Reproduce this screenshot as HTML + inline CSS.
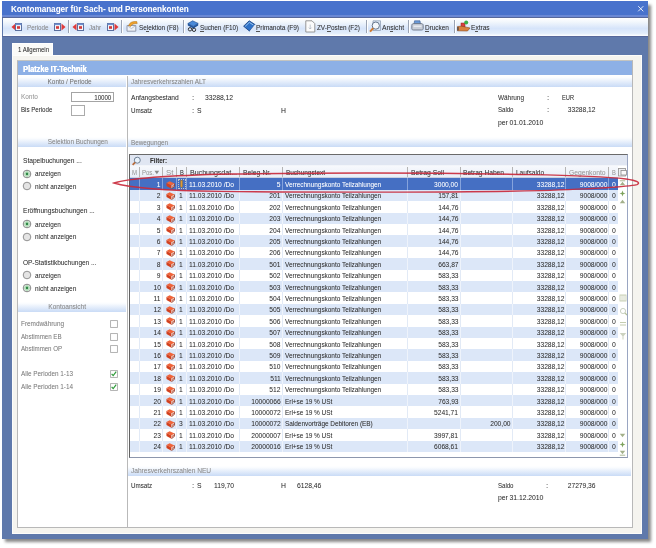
<!DOCTYPE html>
<html><head><meta charset="utf-8"><style>
html,body{margin:0;padding:0;}
body{width:656px;height:548px;position:relative;overflow:hidden;background:#fff;font-family:'Liberation Sans', sans-serif;}
div{box-sizing:border-box;}
</style></head><body>
<div style="position:absolute;left:5px;top:5px;width:645.5px;height:536.5px;background:#888;filter:blur(1.6px);"></div>
<div style="position:absolute;left:2px;top:1px;width:646px;height:538px;background:#5f79ab;"></div>
<div style="position:absolute;left:2px;top:1px;width:646px;height:15px;background:#4872cc;"></div>
<div style="position:absolute;left:2px;top:15px;width:646px;height:1.5px;background:#6a88d4;"></div>
<div style="position:absolute;left:2px;top:16.5px;width:646px;height:1.5px;background:#56679a;"></div>
<div style="position:absolute;left:11.00px;top:5.66px;font-size:8.2px;line-height:8.2px;white-space:pre;color:#fff;transform:scaleX(0.991);transform-origin:left 0;text-shadow:0.3px 0 0 rgba(255,255,255,0.22);font-weight:bold;">Kontomanager für Sach- und Personenkonten</div>
<svg style="position:absolute;left:637px;top:5px" width="8" height="8" viewBox="0 0 8 8"><path d="M1.2 1.2 L6.3 6.3 M6.3 1.2 L1.2 6.3" stroke="#f4f7ff" stroke-width="0.9"/></svg>
<div style="position:absolute;left:2.5px;top:18px;width:645px;height:18px;background:linear-gradient(#ffffff 0%,#f2f7fc 22%,#d6e4fa 58%,#e2edfa 85%,#ffffff 100%);"></div>
<div style="position:absolute;left:2px;top:36px;width:646px;height:1px;background:#56679a;"></div>
<div style="position:absolute;left:12px;top:43px;width:41px;height:13px;background:#fbfbf8;border:1px solid #fff;border-bottom:none;"></div>
<div style="position:absolute;left:18.00px;top:45.93px;font-size:8px;line-height:8px;white-space:pre;color:#333;transform:scaleX(0.750);transform-origin:left 0;text-shadow:0.3px 0 0 rgba(51,51,51,0.22);">1 Allgemein</div>
<div style="position:absolute;left:12px;top:55px;width:630px;height:479px;background:#f5f4ef;border:1px solid #fdfdfb;"></div>
<div style="position:absolute;left:17px;top:60px;width:616px;height:468px;background:#fff;border:1px solid #b8b8b8;border-top-color:#c4c4c0;"></div>
<div style="position:absolute;left:18px;top:61.3px;width:614px;height:14.2px;background:#8db0e6;"></div>
<div style="position:absolute;left:23.00px;top:65.09px;font-size:8.4px;line-height:8.4px;white-space:pre;color:#fff;transform:scaleX(0.882);transform-origin:left 0;text-shadow:0.3px 0 0 rgba(255,255,255,0.22);font-weight:bold;text-shadow:0.35px 0 0 #fff;">Platzke IT-Technik</div>
<div style="position:absolute;left:126.5px;top:75.5px;width:1.2px;height:452px;background:#b9b9b9;"></div>
<div style="position:absolute;left:18px;top:75.5px;width:107.5px;height:11.5px;background:linear-gradient(#fdfeff 10%,#c9dbf6);"></div>
<div style="position:absolute;left:42.42px;top:77.93px;font-size:8px;line-height:8px;white-space:pre;color:#777;transform:scaleX(0.798);transform-origin:center 0;text-shadow:0.3px 0 0 rgba(119,119,119,0.22);">Konto / Periode</div>
<div style="position:absolute;left:128px;top:75.5px;width:504px;height:11.5px;background:linear-gradient(#fdfeff 10%,#c9dbf6);"></div>
<div style="position:absolute;left:131.00px;top:77.93px;font-size:8px;line-height:8px;white-space:pre;color:#888;transform:scaleX(0.797);transform-origin:left 0;text-shadow:0.3px 0 0 rgba(136,136,136,0.22);">Jahresverkehrszahlen ALT</div>
<div style="position:absolute;left:20.70px;top:93.03px;font-size:8px;line-height:8px;white-space:pre;color:#999;transform:scaleX(0.804);transform-origin:left 0;text-shadow:0.3px 0 0 rgba(153,153,153,0.22);">Konto</div>
<div style="position:absolute;left:71.4px;top:92.4px;width:42.4px;height:10px;background:#fff;border:1px solid #a4a4a4;"></div>
<div style="position:absolute;left:89.35px;top:93.63px;font-size:8px;line-height:8px;white-space:pre;color:#333;transform:scaleX(0.764);transform-origin:right 0;text-shadow:0.3px 0 0 rgba(51,51,51,0.22);">10000</div>
<div style="position:absolute;left:20.70px;top:105.93px;font-size:8px;line-height:8px;white-space:pre;color:#333;transform:scaleX(0.765);transform-origin:left 0;text-shadow:0.3px 0 0 rgba(51,51,51,0.22);">Bis Periode</div>
<div style="position:absolute;left:71.4px;top:104.5px;width:13.4px;height:11px;background:#fff;border:1px solid #ababab;"></div>
<div style="position:absolute;left:18px;top:136.7px;width:107.5px;height:10.1px;background:linear-gradient(#fdfeff 10%,#c9dbf6);"></div>
<div style="position:absolute;left:40.39px;top:137.73px;font-size:8px;line-height:8px;white-space:pre;color:#888;transform:scaleX(0.793);transform-origin:center 0;text-shadow:0.3px 0 0 rgba(136,136,136,0.22);">Selektion Buchungen</div>
<div style="position:absolute;left:22.70px;top:157.13px;font-size:8px;line-height:8px;white-space:pre;color:#333;transform:scaleX(0.825);transform-origin:left 0;text-shadow:0.3px 0 0 rgba(51,51,51,0.22);">Stapelbuchungen ...</div>
<svg style="position:absolute;left:21.8px;top:169px" width="10" height="10" viewBox="0 0 10 10"><circle cx="5" cy="5" r="3.8" fill="#fff" stroke="#666" stroke-width="0.8"/><circle cx="5" cy="5" r="2.5" fill="#e4f4e6" stroke="#94d09c" stroke-width="0.7"/><circle cx="5" cy="5" r="1.4" fill="#2f8c46"/></svg>
<div style="position:absolute;left:34.80px;top:170.23px;font-size:8px;line-height:8px;white-space:pre;color:#333;transform:scaleX(0.791);transform-origin:left 0;text-shadow:0.3px 0 0 rgba(51,51,51,0.22);">anzeigen</div>
<svg style="position:absolute;left:21.8px;top:181.2px" width="10" height="10" viewBox="0 0 10 10"><circle cx="5" cy="5" r="3.8" fill="#e4e4e4" stroke="#7a7a7a" stroke-width="0.8"/></svg>
<div style="position:absolute;left:34.80px;top:182.83px;font-size:8px;line-height:8px;white-space:pre;color:#333;transform:scaleX(0.799);transform-origin:left 0;text-shadow:0.3px 0 0 rgba(51,51,51,0.22);">nicht anzeigen</div>
<div style="position:absolute;left:22.90px;top:206.73px;font-size:8px;line-height:8px;white-space:pre;color:#333;transform:scaleX(0.823);transform-origin:left 0;text-shadow:0.3px 0 0 rgba(51,51,51,0.22);">Eröffnungsbuchungen ...</div>
<svg style="position:absolute;left:21.8px;top:219.3px" width="10" height="10" viewBox="0 0 10 10"><circle cx="5" cy="5" r="3.8" fill="#fff" stroke="#666" stroke-width="0.8"/><circle cx="5" cy="5" r="2.5" fill="#e4f4e6" stroke="#94d09c" stroke-width="0.7"/><circle cx="5" cy="5" r="1.4" fill="#2f8c46"/></svg>
<div style="position:absolute;left:34.80px;top:220.63px;font-size:8px;line-height:8px;white-space:pre;color:#333;transform:scaleX(0.791);transform-origin:left 0;text-shadow:0.3px 0 0 rgba(51,51,51,0.22);">anzeigen</div>
<svg style="position:absolute;left:21.8px;top:231.5px" width="10" height="10" viewBox="0 0 10 10"><circle cx="5" cy="5" r="3.8" fill="#e4e4e4" stroke="#7a7a7a" stroke-width="0.8"/></svg>
<div style="position:absolute;left:34.80px;top:233.03px;font-size:8px;line-height:8px;white-space:pre;color:#333;transform:scaleX(0.799);transform-origin:left 0;text-shadow:0.3px 0 0 rgba(51,51,51,0.22);">nicht anzeigen</div>
<div style="position:absolute;left:22.90px;top:258.73px;font-size:8px;line-height:8px;white-space:pre;color:#333;transform:scaleX(0.809);transform-origin:left 0;text-shadow:0.3px 0 0 rgba(51,51,51,0.22);">OP-Statistikbuchungen ...</div>
<svg style="position:absolute;left:21.8px;top:270.2px" width="10" height="10" viewBox="0 0 10 10"><circle cx="5" cy="5" r="3.8" fill="#e4e4e4" stroke="#7a7a7a" stroke-width="0.8"/></svg>
<div style="position:absolute;left:34.80px;top:271.53px;font-size:8px;line-height:8px;white-space:pre;color:#333;transform:scaleX(0.791);transform-origin:left 0;text-shadow:0.3px 0 0 rgba(51,51,51,0.22);">anzeigen</div>
<svg style="position:absolute;left:21.8px;top:283.3px" width="10" height="10" viewBox="0 0 10 10"><circle cx="5" cy="5" r="3.8" fill="#fff" stroke="#666" stroke-width="0.8"/><circle cx="5" cy="5" r="2.5" fill="#e4f4e6" stroke="#94d09c" stroke-width="0.7"/><circle cx="5" cy="5" r="1.4" fill="#2f8c46"/></svg>
<div style="position:absolute;left:34.80px;top:284.73px;font-size:8px;line-height:8px;white-space:pre;color:#333;transform:scaleX(0.799);transform-origin:left 0;text-shadow:0.3px 0 0 rgba(51,51,51,0.22);">nicht anzeigen</div>
<div style="position:absolute;left:18px;top:302px;width:107.5px;height:10px;background:linear-gradient(#fdfeff 10%,#c9dbf6);"></div>
<div style="position:absolute;left:43.67px;top:302.93px;font-size:8px;line-height:8px;white-space:pre;color:#888;transform:scaleX(0.815);transform-origin:center 0;text-shadow:0.3px 0 0 rgba(136,136,136,0.22);">Kontoansicht</div>
<div style="position:absolute;left:20.70px;top:320.23px;font-size:8px;line-height:8px;white-space:pre;color:#7e7e7e;transform:scaleX(0.799);transform-origin:left 0;text-shadow:0.3px 0 0 rgba(126,126,126,0.22);">Fremdwährung</div>
<svg style="position:absolute;left:110px;top:320.2px" width="8" height="8" viewBox="0 0 8 8"><rect x="0.6" y="0.6" width="6.8" height="6.8" fill="#fff" stroke="#a6a6a6" stroke-width="0.85"/></svg>
<div style="position:absolute;left:20.70px;top:332.83px;font-size:8px;line-height:8px;white-space:pre;color:#7e7e7e;transform:scaleX(0.766);transform-origin:left 0;text-shadow:0.3px 0 0 rgba(126,126,126,0.22);">Abstimmen EB</div>
<svg style="position:absolute;left:110px;top:332.79999999999995px" width="8" height="8" viewBox="0 0 8 8"><rect x="0.6" y="0.6" width="6.8" height="6.8" fill="#fff" stroke="#a6a6a6" stroke-width="0.85"/></svg>
<div style="position:absolute;left:20.70px;top:345.43px;font-size:8px;line-height:8px;white-space:pre;color:#7e7e7e;transform:scaleX(0.762);transform-origin:left 0;text-shadow:0.3px 0 0 rgba(126,126,126,0.22);">Abstimmen OP</div>
<svg style="position:absolute;left:110px;top:345.4px" width="8" height="8" viewBox="0 0 8 8"><rect x="0.6" y="0.6" width="6.8" height="6.8" fill="#fff" stroke="#a6a6a6" stroke-width="0.85"/></svg>
<div style="position:absolute;left:20.70px;top:370.03px;font-size:8px;line-height:8px;white-space:pre;color:#7e7e7e;transform:scaleX(0.790);transform-origin:left 0;text-shadow:0.3px 0 0 rgba(126,126,126,0.22);">Alle Perioden 1-13</div>
<svg style="position:absolute;left:110px;top:370.0px" width="8" height="8" viewBox="0 0 8 8"><rect x="0.6" y="0.6" width="6.8" height="6.8" fill="#fff" stroke="#a6a6a6" stroke-width="0.85"/><path d="M1.6 3.8 L3.2 5.6 L6.2 1.6" stroke="#2f9b3a" stroke-width="1.2" fill="none"/></svg>
<div style="position:absolute;left:20.70px;top:382.83px;font-size:8px;line-height:8px;white-space:pre;color:#7e7e7e;transform:scaleX(0.790);transform-origin:left 0;text-shadow:0.3px 0 0 rgba(126,126,126,0.22);">Alle Perioden 1-14</div>
<svg style="position:absolute;left:110px;top:382.79999999999995px" width="8" height="8" viewBox="0 0 8 8"><rect x="0.6" y="0.6" width="6.8" height="6.8" fill="#fff" stroke="#a6a6a6" stroke-width="0.85"/><path d="M1.6 3.8 L3.2 5.6 L6.2 1.6" stroke="#2f9b3a" stroke-width="1.2" fill="none"/></svg>
<div style="position:absolute;left:131.00px;top:93.93px;font-size:8px;line-height:8px;white-space:pre;color:#333;transform:scaleX(0.825);transform-origin:left 0;text-shadow:0.3px 0 0 rgba(51,51,51,0.22);">Anfangsbestand</div>
<div style="position:absolute;left:192.20px;top:93.93px;font-size:8px;line-height:8px;white-space:pre;color:#333;transform:scaleX(0.938);transform-origin:left 0;text-shadow:0.3px 0 0 rgba(51,51,51,0.22);">:</div>
<div style="position:absolute;left:204.60px;top:93.93px;font-size:8px;line-height:8px;white-space:pre;color:#333;transform:scaleX(0.839);transform-origin:left 0;text-shadow:0.3px 0 0 rgba(51,51,51,0.22);">33288,12</div>
<div style="position:absolute;left:131.00px;top:106.53px;font-size:8px;line-height:8px;white-space:pre;color:#333;transform:scaleX(0.774);transform-origin:left 0;text-shadow:0.3px 0 0 rgba(51,51,51,0.22);">Umsatz</div>
<div style="position:absolute;left:192.20px;top:106.53px;font-size:8px;line-height:8px;white-space:pre;color:#333;transform:scaleX(0.938);transform-origin:left 0;text-shadow:0.3px 0 0 rgba(51,51,51,0.22);">:</div>
<div style="position:absolute;left:197.00px;top:106.53px;font-size:8px;line-height:8px;white-space:pre;color:#333;transform:scaleX(0.844);transform-origin:left 0;text-shadow:0.3px 0 0 rgba(51,51,51,0.22);">S</div>
<div style="position:absolute;left:280.70px;top:106.53px;font-size:8px;line-height:8px;white-space:pre;color:#333;transform:scaleX(0.844);transform-origin:left 0;text-shadow:0.3px 0 0 rgba(51,51,51,0.22);">H</div>
<div style="position:absolute;left:497.80px;top:93.93px;font-size:8px;line-height:8px;white-space:pre;color:#333;transform:scaleX(0.801);transform-origin:left 0;text-shadow:0.3px 0 0 rgba(51,51,51,0.22);">Währung</div>
<div style="position:absolute;left:546.80px;top:93.93px;font-size:8px;line-height:8px;white-space:pre;color:#333;transform:scaleX(0.938);transform-origin:left 0;text-shadow:0.3px 0 0 rgba(51,51,51,0.22);">:</div>
<div style="position:absolute;left:562.30px;top:93.93px;font-size:8px;line-height:8px;white-space:pre;color:#333;transform:scaleX(0.710);transform-origin:left 0;text-shadow:0.3px 0 0 rgba(51,51,51,0.22);">EUR</div>
<div style="position:absolute;left:497.80px;top:106.43px;font-size:8px;line-height:8px;white-space:pre;color:#333;transform:scaleX(0.757);transform-origin:left 0;text-shadow:0.3px 0 0 rgba(51,51,51,0.22);">Saldo</div>
<div style="position:absolute;left:546.80px;top:106.43px;font-size:8px;line-height:8px;white-space:pre;color:#333;transform:scaleX(0.938);transform-origin:left 0;text-shadow:0.3px 0 0 rgba(51,51,51,0.22);">:</div>
<div style="position:absolute;left:562.12px;top:106.43px;font-size:8px;line-height:8px;white-space:pre;color:#333;transform:scaleX(0.824);transform-origin:right 0;text-shadow:0.3px 0 0 rgba(51,51,51,0.22);">33288,12</div>
<div style="position:absolute;left:497.80px;top:118.93px;font-size:8px;line-height:8px;white-space:pre;color:#333;transform:scaleX(0.840);transform-origin:left 0;text-shadow:0.3px 0 0 rgba(51,51,51,0.22);">per 01.01.2010</div>
<div style="position:absolute;left:128px;top:137.2px;width:504px;height:9.8px;background:linear-gradient(#fdfeff 10%,#c9dbf6);"></div>
<div style="position:absolute;left:131.00px;top:138.73px;font-size:8px;line-height:8px;white-space:pre;color:#888;transform:scaleX(0.792);transform-origin:left 0;text-shadow:0.3px 0 0 rgba(136,136,136,0.22);">Bewegungen</div>
<div style="position:absolute;left:128px;top:466px;width:503px;height:9.8px;background:linear-gradient(#fdfeff 10%,#c9dbf6);"></div>
<div style="position:absolute;left:130.70px;top:467.43px;font-size:8px;line-height:8px;white-space:pre;color:#8c8c8c;transform:scaleX(0.822);transform-origin:left 0;text-shadow:0.3px 0 0 rgba(140,140,140,0.22);">Jahresverkehrszahlen NEU</div>
<div style="position:absolute;left:131.00px;top:481.73px;font-size:8px;line-height:8px;white-space:pre;color:#333;transform:scaleX(0.774);transform-origin:left 0;text-shadow:0.3px 0 0 rgba(51,51,51,0.22);">Umsatz</div>
<div style="position:absolute;left:192.20px;top:481.73px;font-size:8px;line-height:8px;white-space:pre;color:#333;transform:scaleX(0.938);transform-origin:left 0;text-shadow:0.3px 0 0 rgba(51,51,51,0.22);">:</div>
<div style="position:absolute;left:197.20px;top:481.73px;font-size:8px;line-height:8px;white-space:pre;color:#333;transform:scaleX(0.844);transform-origin:left 0;text-shadow:0.3px 0 0 rgba(51,51,51,0.22);">S</div>
<div style="position:absolute;left:210.43px;top:481.73px;font-size:8px;line-height:8px;white-space:pre;color:#333;transform:scaleX(0.829);transform-origin:right 0;text-shadow:0.3px 0 0 rgba(51,51,51,0.22);">119,70</div>
<div style="position:absolute;left:281.40px;top:481.73px;font-size:8px;line-height:8px;white-space:pre;color:#333;transform:scaleX(0.844);transform-origin:left 0;text-shadow:0.3px 0 0 rgba(51,51,51,0.22);">H</div>
<div style="position:absolute;left:296.50px;top:481.73px;font-size:8px;line-height:8px;white-space:pre;color:#333;transform:scaleX(0.840);transform-origin:left 0;text-shadow:0.3px 0 0 rgba(51,51,51,0.22);">6128,46</div>
<div style="position:absolute;left:497.60px;top:482.23px;font-size:8px;line-height:8px;white-space:pre;color:#333;transform:scaleX(0.757);transform-origin:left 0;text-shadow:0.3px 0 0 rgba(51,51,51,0.22);">Saldo</div>
<div style="position:absolute;left:546.30px;top:482.23px;font-size:8px;line-height:8px;white-space:pre;color:#333;transform:scaleX(0.938);transform-origin:left 0;text-shadow:0.3px 0 0 rgba(51,51,51,0.22);">:</div>
<div style="position:absolute;left:562.02px;top:482.23px;font-size:8px;line-height:8px;white-space:pre;color:#333;transform:scaleX(0.827);transform-origin:right 0;text-shadow:0.3px 0 0 rgba(51,51,51,0.22);">27279,36</div>
<div style="position:absolute;left:497.60px;top:494.43px;font-size:8px;line-height:8px;white-space:pre;color:#333;transform:scaleX(0.843);transform-origin:left 0;text-shadow:0.3px 0 0 rgba(51,51,51,0.22);">per 31.12.2010</div>
<div style="position:absolute;left:129px;top:153.5px;width:498.5px;height:304.0px;background:#fff;border-top:1px solid #6a6a6a;border-left:1px solid #626262;border-right:1px solid #9aa6c2;border-bottom:1px solid #8d97ad;"></div>
<div style="position:absolute;left:130px;top:154.5px;width:496.5px;height:11.2px;background:#e0e6f2;border-bottom:1px solid #f2f5fa;"></div>
<svg style="position:absolute;left:131px;top:156px" width="11" height="10" viewBox="0 0 11 10"><circle cx="6.3" cy="4.2" r="3" fill="#e9f2fb" stroke="#6f8196" stroke-width="1"/><path d="M4.2 6.4 L1.6 8.9" stroke="#b86a3a" stroke-width="1.8"/></svg>
<div style="position:absolute;left:150.30px;top:156.93px;font-size:8px;line-height:8px;white-space:pre;color:#333;transform:scaleX(0.765);transform-origin:left 0;text-shadow:0.3px 0 0 rgba(51,51,51,0.22);font-weight:bold;">Filter:</div>
<div style="position:absolute;left:130px;top:165.7px;width:487.5px;height:12.6px;background:linear-gradient(#f7f9fd,#e9eef8);border-bottom:1px solid #c9d1e1;"></div>
<div style="position:absolute;left:138.5px;top:167px;width:1px;height:10px;background:#b4b4b4;"></div>
<div style="position:absolute;left:162.0px;top:167px;width:1px;height:10px;background:#b4b4b4;"></div>
<div style="position:absolute;left:176.0px;top:167px;width:1px;height:10px;background:#b4b4b4;"></div>
<div style="position:absolute;left:186.0px;top:167px;width:1px;height:10px;background:#b4b4b4;"></div>
<div style="position:absolute;left:239.0px;top:167px;width:1px;height:10px;background:#b4b4b4;"></div>
<div style="position:absolute;left:282.0px;top:167px;width:1px;height:10px;background:#b4b4b4;"></div>
<div style="position:absolute;left:407.0px;top:167px;width:1px;height:10px;background:#b4b4b4;"></div>
<div style="position:absolute;left:460.0px;top:167px;width:1px;height:10px;background:#b4b4b4;"></div>
<div style="position:absolute;left:512.0px;top:167px;width:1px;height:10px;background:#b4b4b4;"></div>
<div style="position:absolute;left:565.0px;top:167px;width:1px;height:10px;background:#b4b4b4;"></div>
<div style="position:absolute;left:608.0px;top:167px;width:1px;height:10px;background:#b4b4b4;"></div>
<div style="position:absolute;left:132.00px;top:168.73px;font-size:8px;line-height:8px;white-space:pre;color:#9a9a9a;transform:scaleX(0.749);transform-origin:left 0;text-shadow:0.3px 0 0 rgba(154,154,154,0.22);">M</div>
<div style="position:absolute;left:141.70px;top:168.73px;font-size:8px;line-height:8px;white-space:pre;color:#9a9a9a;transform:scaleX(0.749);transform-origin:left 0;text-shadow:0.3px 0 0 rgba(154,154,154,0.22);">Pos.</div>
<svg style="position:absolute;left:154px;top:170px" width="6" height="5"><path d="M0.5 0.8 L5.2 0.8 L2.85 4.2 Z" fill="#8a8a8a"/></svg>
<div style="position:absolute;left:165.50px;top:168.73px;font-size:8px;line-height:8px;white-space:pre;color:#9a9a9a;transform:scaleX(0.965);transform-origin:left 0;text-shadow:0.3px 0 0 rgba(154,154,154,0.22);">St</div>
<div style="position:absolute;left:180.00px;top:168.73px;font-size:8px;line-height:8px;white-space:pre;color:#333;transform:scaleX(0.711);transform-origin:left 0;text-shadow:0.3px 0 0 rgba(51,51,51,0.22);">B</div>
<div style="position:absolute;left:189.80px;top:168.73px;font-size:8px;line-height:8px;white-space:pre;color:#333;transform:scaleX(0.881);transform-origin:left 0;text-shadow:0.3px 0 0 rgba(51,51,51,0.22);">Buchungsdat...</div>
<div style="position:absolute;left:243.00px;top:168.73px;font-size:8px;line-height:8px;white-space:pre;color:#333;transform:scaleX(0.839);transform-origin:left 0;text-shadow:0.3px 0 0 rgba(51,51,51,0.22);">Beleg-Nr.</div>
<div style="position:absolute;left:286.00px;top:168.73px;font-size:8px;line-height:8px;white-space:pre;color:#333;transform:scaleX(0.804);transform-origin:left 0;text-shadow:0.3px 0 0 rgba(51,51,51,0.22);">Buchungstext</div>
<div style="position:absolute;left:411.00px;top:168.73px;font-size:8px;line-height:8px;white-space:pre;color:#333;transform:scaleX(0.843);transform-origin:left 0;text-shadow:0.3px 0 0 rgba(51,51,51,0.22);">Betrag Soll</div>
<div style="position:absolute;left:463.00px;top:168.73px;font-size:8px;line-height:8px;white-space:pre;color:#333;transform:scaleX(0.830);transform-origin:left 0;text-shadow:0.3px 0 0 rgba(51,51,51,0.22);">Betrag Haben</div>
<div style="position:absolute;left:516.00px;top:168.73px;font-size:8px;line-height:8px;white-space:pre;color:#333;transform:scaleX(0.807);transform-origin:left 0;text-shadow:0.3px 0 0 rgba(51,51,51,0.22);">Laufsaldo</div>
<div style="position:absolute;left:568.50px;top:168.73px;font-size:8px;line-height:8px;white-space:pre;color:#9a9a9a;transform:scaleX(0.837);transform-origin:left 0;text-shadow:0.3px 0 0 rgba(154,154,154,0.22);">Gegenkonto</div>
<div style="position:absolute;left:612.00px;top:168.73px;font-size:8px;line-height:8px;white-space:pre;color:#9a9a9a;transform:scaleX(0.711);transform-origin:left 0;text-shadow:0.3px 0 0 rgba(154,154,154,0.22);">B</div>
<svg style="position:absolute;left:618px;top:167px" width="9" height="10" viewBox="0 0 9 10"><rect x="0.5" y="1.5" width="7" height="7.5" fill="#eef0f4" stroke="#9a9a9a" stroke-width="0.9"/><rect x="3" y="3.5" width="5.5" height="4.5" fill="#fafafa" stroke="#8c8c8c" stroke-width="0.8"/></svg>
<div style="position:absolute;left:130px;top:178.3px;width:487.5px;height:11.5px;background:#456fc3;"></div>
<div style="position:absolute;left:138.5px;top:178.3px;width:1px;height:11.5px;background:#86a3dc;"></div>
<div style="position:absolute;left:162.0px;top:178.3px;width:1px;height:11.5px;background:#86a3dc;"></div>
<div style="position:absolute;left:176.0px;top:178.3px;width:1px;height:11.5px;background:#86a3dc;"></div>
<div style="position:absolute;left:186.0px;top:178.3px;width:1px;height:11.5px;background:#86a3dc;"></div>
<div style="position:absolute;left:239.0px;top:178.3px;width:1px;height:11.5px;background:#86a3dc;"></div>
<div style="position:absolute;left:282.0px;top:178.3px;width:1px;height:11.5px;background:#86a3dc;"></div>
<div style="position:absolute;left:407.0px;top:178.3px;width:1px;height:11.5px;background:#86a3dc;"></div>
<div style="position:absolute;left:460.0px;top:178.3px;width:1px;height:11.5px;background:#86a3dc;"></div>
<div style="position:absolute;left:512.0px;top:178.3px;width:1px;height:11.5px;background:#86a3dc;"></div>
<div style="position:absolute;left:565.0px;top:178.3px;width:1px;height:11.5px;background:#86a3dc;"></div>
<div style="position:absolute;left:608.0px;top:178.3px;width:1px;height:11.5px;background:#86a3dc;"></div>
<div style="position:absolute;left:156.05px;top:180.93px;font-size:8px;line-height:8px;white-space:pre;color:#fff;transform:scaleX(0.825);transform-origin:right 0;text-shadow:0.3px 0 0 rgba(255,255,255,0.22);">1</div>
<svg style="position:absolute;left:165.5px;top:180.5px" width="9" height="8" viewBox="0 0 9 8"><path d="M0.4 2 L3.6 0.3 L8.6 2.5 L5.4 4.5 Z" fill="#f0643a"/><path d="M0.4 2 L0.5 5 L5.4 7.8 L5.4 4.5 Z" fill="#d2401e"/><path d="M5.4 4.5 L8.6 2.5 L8.6 5.2 L5.4 7.8 Z" fill="#e9c0b0"/><path d="M5.4 7.8 L8.6 5.2 L8.6 2.5" fill="none" stroke="#7a1e10" stroke-width="0.7"/><path d="M5.6 6 L8.4 3.8" stroke="#b03020" stroke-width="0.5"/></svg>
<div style="position:absolute;left:177.5px;top:179.3px;width:8px;height:9.5px;border:1px dotted #c8c8c8;"></div>
<svg style="position:absolute;left:179px;top:180.3px" width="5" height="8" viewBox="0 0 5 8"><path d="M1.6 0.5 L3.4 0.5 L3.4 6.2 L2.5 7.6 L1.6 6.2 Z" fill="#e9a338" stroke="#9b6b22" stroke-width="0.5"/></svg>
<div style="position:absolute;left:189.40px;top:180.93px;font-size:8px;line-height:8px;white-space:pre;color:#fff;transform:scaleX(0.831);transform-origin:left 0;text-shadow:0.3px 0 0 rgba(255,255,255,0.22);">11.03.2010 /Do</div>
<div style="position:absolute;left:276.15px;top:180.93px;font-size:8px;line-height:8px;white-space:pre;color:#fff;transform:scaleX(0.825);transform-origin:right 0;text-shadow:0.3px 0 0 rgba(255,255,255,0.22);">5</div>
<div style="position:absolute;left:285.00px;top:180.93px;font-size:8px;line-height:8px;white-space:pre;color:#fff;transform:scaleX(0.802);transform-origin:left 0;text-shadow:0.3px 0 0 rgba(255,255,255,0.22);">Verrechnungskonto Teilzahlungen</div>
<div style="position:absolute;left:429.38px;top:180.93px;font-size:8px;line-height:8px;white-space:pre;color:#fff;transform:scaleX(0.825);transform-origin:right 0;text-shadow:0.3px 0 0 rgba(255,255,255,0.22);">3000,00</div>
<div style="position:absolute;left:530.62px;top:180.93px;font-size:8px;line-height:8px;white-space:pre;color:#fff;transform:scaleX(0.825);transform-origin:right 0;text-shadow:0.3px 0 0 rgba(255,255,255,0.22);">33288,12</div>
<div style="position:absolute;left:573.62px;top:180.93px;font-size:8px;line-height:8px;white-space:pre;color:#fff;transform:scaleX(0.825);transform-origin:right 0;text-shadow:0.3px 0 0 rgba(255,255,255,0.22);">9008/000</div>
<div style="position:absolute;left:612.30px;top:180.93px;font-size:8px;line-height:8px;white-space:pre;color:#fff;transform:scaleX(0.844);transform-origin:left 0;text-shadow:0.3px 0 0 rgba(255,255,255,0.22);">0</div>
<div style="position:absolute;left:130px;top:189.70000000000002px;width:487.5px;height:11.5px;background:#dce7f8;"></div>
<div style="position:absolute;left:138.5px;top:189.70000000000002px;width:1px;height:11.5px;background:#eef3fb;"></div>
<div style="position:absolute;left:162.0px;top:189.70000000000002px;width:1px;height:11.5px;background:#eef3fb;"></div>
<div style="position:absolute;left:176.0px;top:189.70000000000002px;width:1px;height:11.5px;background:#eef3fb;"></div>
<div style="position:absolute;left:186.0px;top:189.70000000000002px;width:1px;height:11.5px;background:#eef3fb;"></div>
<div style="position:absolute;left:239.0px;top:189.70000000000002px;width:1px;height:11.5px;background:#eef3fb;"></div>
<div style="position:absolute;left:282.0px;top:189.70000000000002px;width:1px;height:11.5px;background:#eef3fb;"></div>
<div style="position:absolute;left:407.0px;top:189.70000000000002px;width:1px;height:11.5px;background:#eef3fb;"></div>
<div style="position:absolute;left:460.0px;top:189.70000000000002px;width:1px;height:11.5px;background:#eef3fb;"></div>
<div style="position:absolute;left:512.0px;top:189.70000000000002px;width:1px;height:11.5px;background:#eef3fb;"></div>
<div style="position:absolute;left:565.0px;top:189.70000000000002px;width:1px;height:11.5px;background:#eef3fb;"></div>
<div style="position:absolute;left:608.0px;top:189.70000000000002px;width:1px;height:11.5px;background:#eef3fb;"></div>
<div style="position:absolute;left:156.05px;top:192.33px;font-size:8px;line-height:8px;white-space:pre;color:#333;transform:scaleX(0.825);transform-origin:right 0;text-shadow:0.3px 0 0 rgba(51,51,51,0.22);">2</div>
<svg style="position:absolute;left:165.5px;top:191.9px" width="9" height="8" viewBox="0 0 9 8"><path d="M0.4 2 L3.6 0.3 L8.6 2.5 L5.4 4.5 Z" fill="#f0643a"/><path d="M0.4 2 L0.5 5 L5.4 7.8 L5.4 4.5 Z" fill="#d2401e"/><path d="M5.4 4.5 L8.6 2.5 L8.6 5.2 L5.4 7.8 Z" fill="#e9c0b0"/><path d="M5.4 7.8 L8.6 5.2 L8.6 2.5" fill="none" stroke="#7a1e10" stroke-width="0.7"/><path d="M5.6 6 L8.4 3.8" stroke="#b03020" stroke-width="0.5"/></svg>
<div style="position:absolute;left:179.20px;top:192.33px;font-size:8px;line-height:8px;white-space:pre;color:#333;transform:scaleX(0.825);transform-origin:left 0;text-shadow:0.3px 0 0 rgba(51,51,51,0.22);">1</div>
<div style="position:absolute;left:189.40px;top:192.33px;font-size:8px;line-height:8px;white-space:pre;color:#333;transform:scaleX(0.831);transform-origin:left 0;text-shadow:0.3px 0 0 rgba(51,51,51,0.22);">11.03.2010 /Do</div>
<div style="position:absolute;left:267.24px;top:192.33px;font-size:8px;line-height:8px;white-space:pre;color:#333;transform:scaleX(0.825);transform-origin:right 0;text-shadow:0.3px 0 0 rgba(51,51,51,0.22);">201</div>
<div style="position:absolute;left:285.00px;top:192.33px;font-size:8px;line-height:8px;white-space:pre;color:#333;transform:scaleX(0.802);transform-origin:left 0;text-shadow:0.3px 0 0 rgba(51,51,51,0.22);">Verrechnungskonto Teilzahlungen</div>
<div style="position:absolute;left:433.83px;top:192.33px;font-size:8px;line-height:8px;white-space:pre;color:#333;transform:scaleX(0.825);transform-origin:right 0;text-shadow:0.3px 0 0 rgba(51,51,51,0.22);">157,81</div>
<div style="position:absolute;left:530.62px;top:192.33px;font-size:8px;line-height:8px;white-space:pre;color:#333;transform:scaleX(0.825);transform-origin:right 0;text-shadow:0.3px 0 0 rgba(51,51,51,0.22);">33288,12</div>
<div style="position:absolute;left:573.62px;top:192.33px;font-size:8px;line-height:8px;white-space:pre;color:#333;transform:scaleX(0.825);transform-origin:right 0;text-shadow:0.3px 0 0 rgba(51,51,51,0.22);">9008/000</div>
<div style="position:absolute;left:612.30px;top:192.33px;font-size:8px;line-height:8px;white-space:pre;color:#333;transform:scaleX(0.844);transform-origin:left 0;text-shadow:0.3px 0 0 rgba(51,51,51,0.22);">0</div>
<div style="position:absolute;left:130px;top:201.10000000000002px;width:487.5px;height:11.5px;background:#fff;"></div>
<div style="position:absolute;left:138.5px;top:201.10000000000002px;width:1px;height:11.5px;background:#e2eaf6;"></div>
<div style="position:absolute;left:162.0px;top:201.10000000000002px;width:1px;height:11.5px;background:#e2eaf6;"></div>
<div style="position:absolute;left:176.0px;top:201.10000000000002px;width:1px;height:11.5px;background:#e2eaf6;"></div>
<div style="position:absolute;left:186.0px;top:201.10000000000002px;width:1px;height:11.5px;background:#e2eaf6;"></div>
<div style="position:absolute;left:239.0px;top:201.10000000000002px;width:1px;height:11.5px;background:#e2eaf6;"></div>
<div style="position:absolute;left:282.0px;top:201.10000000000002px;width:1px;height:11.5px;background:#e2eaf6;"></div>
<div style="position:absolute;left:407.0px;top:201.10000000000002px;width:1px;height:11.5px;background:#e2eaf6;"></div>
<div style="position:absolute;left:460.0px;top:201.10000000000002px;width:1px;height:11.5px;background:#e2eaf6;"></div>
<div style="position:absolute;left:512.0px;top:201.10000000000002px;width:1px;height:11.5px;background:#e2eaf6;"></div>
<div style="position:absolute;left:565.0px;top:201.10000000000002px;width:1px;height:11.5px;background:#e2eaf6;"></div>
<div style="position:absolute;left:608.0px;top:201.10000000000002px;width:1px;height:11.5px;background:#e2eaf6;"></div>
<div style="position:absolute;left:156.05px;top:203.73px;font-size:8px;line-height:8px;white-space:pre;color:#333;transform:scaleX(0.825);transform-origin:right 0;text-shadow:0.3px 0 0 rgba(51,51,51,0.22);">3</div>
<svg style="position:absolute;left:165.5px;top:203.3px" width="9" height="8" viewBox="0 0 9 8"><path d="M0.4 2 L3.6 0.3 L8.6 2.5 L5.4 4.5 Z" fill="#f0643a"/><path d="M0.4 2 L0.5 5 L5.4 7.8 L5.4 4.5 Z" fill="#d2401e"/><path d="M5.4 4.5 L8.6 2.5 L8.6 5.2 L5.4 7.8 Z" fill="#e9c0b0"/><path d="M5.4 7.8 L8.6 5.2 L8.6 2.5" fill="none" stroke="#7a1e10" stroke-width="0.7"/><path d="M5.6 6 L8.4 3.8" stroke="#b03020" stroke-width="0.5"/></svg>
<div style="position:absolute;left:179.20px;top:203.73px;font-size:8px;line-height:8px;white-space:pre;color:#333;transform:scaleX(0.825);transform-origin:left 0;text-shadow:0.3px 0 0 rgba(51,51,51,0.22);">1</div>
<div style="position:absolute;left:189.40px;top:203.73px;font-size:8px;line-height:8px;white-space:pre;color:#333;transform:scaleX(0.831);transform-origin:left 0;text-shadow:0.3px 0 0 rgba(51,51,51,0.22);">11.03.2010 /Do</div>
<div style="position:absolute;left:267.24px;top:203.73px;font-size:8px;line-height:8px;white-space:pre;color:#333;transform:scaleX(0.825);transform-origin:right 0;text-shadow:0.3px 0 0 rgba(51,51,51,0.22);">202</div>
<div style="position:absolute;left:285.00px;top:203.73px;font-size:8px;line-height:8px;white-space:pre;color:#333;transform:scaleX(0.802);transform-origin:left 0;text-shadow:0.3px 0 0 rgba(51,51,51,0.22);">Verrechnungskonto Teilzahlungen</div>
<div style="position:absolute;left:433.83px;top:203.73px;font-size:8px;line-height:8px;white-space:pre;color:#333;transform:scaleX(0.825);transform-origin:right 0;text-shadow:0.3px 0 0 rgba(51,51,51,0.22);">144,76</div>
<div style="position:absolute;left:530.62px;top:203.73px;font-size:8px;line-height:8px;white-space:pre;color:#333;transform:scaleX(0.825);transform-origin:right 0;text-shadow:0.3px 0 0 rgba(51,51,51,0.22);">33288,12</div>
<div style="position:absolute;left:573.62px;top:203.73px;font-size:8px;line-height:8px;white-space:pre;color:#333;transform:scaleX(0.825);transform-origin:right 0;text-shadow:0.3px 0 0 rgba(51,51,51,0.22);">9008/000</div>
<div style="position:absolute;left:612.30px;top:203.73px;font-size:8px;line-height:8px;white-space:pre;color:#333;transform:scaleX(0.844);transform-origin:left 0;text-shadow:0.3px 0 0 rgba(51,51,51,0.22);">0</div>
<div style="position:absolute;left:130px;top:212.5px;width:487.5px;height:11.5px;background:#dce7f8;"></div>
<div style="position:absolute;left:138.5px;top:212.5px;width:1px;height:11.5px;background:#eef3fb;"></div>
<div style="position:absolute;left:162.0px;top:212.5px;width:1px;height:11.5px;background:#eef3fb;"></div>
<div style="position:absolute;left:176.0px;top:212.5px;width:1px;height:11.5px;background:#eef3fb;"></div>
<div style="position:absolute;left:186.0px;top:212.5px;width:1px;height:11.5px;background:#eef3fb;"></div>
<div style="position:absolute;left:239.0px;top:212.5px;width:1px;height:11.5px;background:#eef3fb;"></div>
<div style="position:absolute;left:282.0px;top:212.5px;width:1px;height:11.5px;background:#eef3fb;"></div>
<div style="position:absolute;left:407.0px;top:212.5px;width:1px;height:11.5px;background:#eef3fb;"></div>
<div style="position:absolute;left:460.0px;top:212.5px;width:1px;height:11.5px;background:#eef3fb;"></div>
<div style="position:absolute;left:512.0px;top:212.5px;width:1px;height:11.5px;background:#eef3fb;"></div>
<div style="position:absolute;left:565.0px;top:212.5px;width:1px;height:11.5px;background:#eef3fb;"></div>
<div style="position:absolute;left:608.0px;top:212.5px;width:1px;height:11.5px;background:#eef3fb;"></div>
<div style="position:absolute;left:156.05px;top:215.13px;font-size:8px;line-height:8px;white-space:pre;color:#333;transform:scaleX(0.825);transform-origin:right 0;text-shadow:0.3px 0 0 rgba(51,51,51,0.22);">4</div>
<svg style="position:absolute;left:165.5px;top:214.7px" width="9" height="8" viewBox="0 0 9 8"><path d="M0.4 2 L3.6 0.3 L8.6 2.5 L5.4 4.5 Z" fill="#f0643a"/><path d="M0.4 2 L0.5 5 L5.4 7.8 L5.4 4.5 Z" fill="#d2401e"/><path d="M5.4 4.5 L8.6 2.5 L8.6 5.2 L5.4 7.8 Z" fill="#e9c0b0"/><path d="M5.4 7.8 L8.6 5.2 L8.6 2.5" fill="none" stroke="#7a1e10" stroke-width="0.7"/><path d="M5.6 6 L8.4 3.8" stroke="#b03020" stroke-width="0.5"/></svg>
<div style="position:absolute;left:179.20px;top:215.13px;font-size:8px;line-height:8px;white-space:pre;color:#333;transform:scaleX(0.825);transform-origin:left 0;text-shadow:0.3px 0 0 rgba(51,51,51,0.22);">1</div>
<div style="position:absolute;left:189.40px;top:215.13px;font-size:8px;line-height:8px;white-space:pre;color:#333;transform:scaleX(0.831);transform-origin:left 0;text-shadow:0.3px 0 0 rgba(51,51,51,0.22);">11.03.2010 /Do</div>
<div style="position:absolute;left:267.24px;top:215.13px;font-size:8px;line-height:8px;white-space:pre;color:#333;transform:scaleX(0.825);transform-origin:right 0;text-shadow:0.3px 0 0 rgba(51,51,51,0.22);">203</div>
<div style="position:absolute;left:285.00px;top:215.13px;font-size:8px;line-height:8px;white-space:pre;color:#333;transform:scaleX(0.802);transform-origin:left 0;text-shadow:0.3px 0 0 rgba(51,51,51,0.22);">Verrechnungskonto Teilzahlungen</div>
<div style="position:absolute;left:433.83px;top:215.13px;font-size:8px;line-height:8px;white-space:pre;color:#333;transform:scaleX(0.825);transform-origin:right 0;text-shadow:0.3px 0 0 rgba(51,51,51,0.22);">144,76</div>
<div style="position:absolute;left:530.62px;top:215.13px;font-size:8px;line-height:8px;white-space:pre;color:#333;transform:scaleX(0.825);transform-origin:right 0;text-shadow:0.3px 0 0 rgba(51,51,51,0.22);">33288,12</div>
<div style="position:absolute;left:573.62px;top:215.13px;font-size:8px;line-height:8px;white-space:pre;color:#333;transform:scaleX(0.825);transform-origin:right 0;text-shadow:0.3px 0 0 rgba(51,51,51,0.22);">9008/000</div>
<div style="position:absolute;left:612.30px;top:215.13px;font-size:8px;line-height:8px;white-space:pre;color:#333;transform:scaleX(0.844);transform-origin:left 0;text-shadow:0.3px 0 0 rgba(51,51,51,0.22);">0</div>
<div style="position:absolute;left:130px;top:223.9px;width:487.5px;height:11.5px;background:#fff;"></div>
<div style="position:absolute;left:138.5px;top:223.9px;width:1px;height:11.5px;background:#e2eaf6;"></div>
<div style="position:absolute;left:162.0px;top:223.9px;width:1px;height:11.5px;background:#e2eaf6;"></div>
<div style="position:absolute;left:176.0px;top:223.9px;width:1px;height:11.5px;background:#e2eaf6;"></div>
<div style="position:absolute;left:186.0px;top:223.9px;width:1px;height:11.5px;background:#e2eaf6;"></div>
<div style="position:absolute;left:239.0px;top:223.9px;width:1px;height:11.5px;background:#e2eaf6;"></div>
<div style="position:absolute;left:282.0px;top:223.9px;width:1px;height:11.5px;background:#e2eaf6;"></div>
<div style="position:absolute;left:407.0px;top:223.9px;width:1px;height:11.5px;background:#e2eaf6;"></div>
<div style="position:absolute;left:460.0px;top:223.9px;width:1px;height:11.5px;background:#e2eaf6;"></div>
<div style="position:absolute;left:512.0px;top:223.9px;width:1px;height:11.5px;background:#e2eaf6;"></div>
<div style="position:absolute;left:565.0px;top:223.9px;width:1px;height:11.5px;background:#e2eaf6;"></div>
<div style="position:absolute;left:608.0px;top:223.9px;width:1px;height:11.5px;background:#e2eaf6;"></div>
<div style="position:absolute;left:156.05px;top:226.53px;font-size:8px;line-height:8px;white-space:pre;color:#333;transform:scaleX(0.825);transform-origin:right 0;text-shadow:0.3px 0 0 rgba(51,51,51,0.22);">5</div>
<svg style="position:absolute;left:165.5px;top:226.1px" width="9" height="8" viewBox="0 0 9 8"><path d="M0.4 2 L3.6 0.3 L8.6 2.5 L5.4 4.5 Z" fill="#f0643a"/><path d="M0.4 2 L0.5 5 L5.4 7.8 L5.4 4.5 Z" fill="#d2401e"/><path d="M5.4 4.5 L8.6 2.5 L8.6 5.2 L5.4 7.8 Z" fill="#e9c0b0"/><path d="M5.4 7.8 L8.6 5.2 L8.6 2.5" fill="none" stroke="#7a1e10" stroke-width="0.7"/><path d="M5.6 6 L8.4 3.8" stroke="#b03020" stroke-width="0.5"/></svg>
<div style="position:absolute;left:179.20px;top:226.53px;font-size:8px;line-height:8px;white-space:pre;color:#333;transform:scaleX(0.825);transform-origin:left 0;text-shadow:0.3px 0 0 rgba(51,51,51,0.22);">1</div>
<div style="position:absolute;left:189.40px;top:226.53px;font-size:8px;line-height:8px;white-space:pre;color:#333;transform:scaleX(0.831);transform-origin:left 0;text-shadow:0.3px 0 0 rgba(51,51,51,0.22);">11.03.2010 /Do</div>
<div style="position:absolute;left:267.24px;top:226.53px;font-size:8px;line-height:8px;white-space:pre;color:#333;transform:scaleX(0.825);transform-origin:right 0;text-shadow:0.3px 0 0 rgba(51,51,51,0.22);">204</div>
<div style="position:absolute;left:285.00px;top:226.53px;font-size:8px;line-height:8px;white-space:pre;color:#333;transform:scaleX(0.802);transform-origin:left 0;text-shadow:0.3px 0 0 rgba(51,51,51,0.22);">Verrechnungskonto Teilzahlungen</div>
<div style="position:absolute;left:433.83px;top:226.53px;font-size:8px;line-height:8px;white-space:pre;color:#333;transform:scaleX(0.825);transform-origin:right 0;text-shadow:0.3px 0 0 rgba(51,51,51,0.22);">144,76</div>
<div style="position:absolute;left:530.62px;top:226.53px;font-size:8px;line-height:8px;white-space:pre;color:#333;transform:scaleX(0.825);transform-origin:right 0;text-shadow:0.3px 0 0 rgba(51,51,51,0.22);">33288,12</div>
<div style="position:absolute;left:573.62px;top:226.53px;font-size:8px;line-height:8px;white-space:pre;color:#333;transform:scaleX(0.825);transform-origin:right 0;text-shadow:0.3px 0 0 rgba(51,51,51,0.22);">9008/000</div>
<div style="position:absolute;left:612.30px;top:226.53px;font-size:8px;line-height:8px;white-space:pre;color:#333;transform:scaleX(0.844);transform-origin:left 0;text-shadow:0.3px 0 0 rgba(51,51,51,0.22);">0</div>
<div style="position:absolute;left:130px;top:235.3px;width:487.5px;height:11.5px;background:#dce7f8;"></div>
<div style="position:absolute;left:138.5px;top:235.3px;width:1px;height:11.5px;background:#eef3fb;"></div>
<div style="position:absolute;left:162.0px;top:235.3px;width:1px;height:11.5px;background:#eef3fb;"></div>
<div style="position:absolute;left:176.0px;top:235.3px;width:1px;height:11.5px;background:#eef3fb;"></div>
<div style="position:absolute;left:186.0px;top:235.3px;width:1px;height:11.5px;background:#eef3fb;"></div>
<div style="position:absolute;left:239.0px;top:235.3px;width:1px;height:11.5px;background:#eef3fb;"></div>
<div style="position:absolute;left:282.0px;top:235.3px;width:1px;height:11.5px;background:#eef3fb;"></div>
<div style="position:absolute;left:407.0px;top:235.3px;width:1px;height:11.5px;background:#eef3fb;"></div>
<div style="position:absolute;left:460.0px;top:235.3px;width:1px;height:11.5px;background:#eef3fb;"></div>
<div style="position:absolute;left:512.0px;top:235.3px;width:1px;height:11.5px;background:#eef3fb;"></div>
<div style="position:absolute;left:565.0px;top:235.3px;width:1px;height:11.5px;background:#eef3fb;"></div>
<div style="position:absolute;left:608.0px;top:235.3px;width:1px;height:11.5px;background:#eef3fb;"></div>
<div style="position:absolute;left:156.05px;top:237.93px;font-size:8px;line-height:8px;white-space:pre;color:#333;transform:scaleX(0.825);transform-origin:right 0;text-shadow:0.3px 0 0 rgba(51,51,51,0.22);">6</div>
<svg style="position:absolute;left:165.5px;top:237.5px" width="9" height="8" viewBox="0 0 9 8"><path d="M0.4 2 L3.6 0.3 L8.6 2.5 L5.4 4.5 Z" fill="#f0643a"/><path d="M0.4 2 L0.5 5 L5.4 7.8 L5.4 4.5 Z" fill="#d2401e"/><path d="M5.4 4.5 L8.6 2.5 L8.6 5.2 L5.4 7.8 Z" fill="#e9c0b0"/><path d="M5.4 7.8 L8.6 5.2 L8.6 2.5" fill="none" stroke="#7a1e10" stroke-width="0.7"/><path d="M5.6 6 L8.4 3.8" stroke="#b03020" stroke-width="0.5"/></svg>
<div style="position:absolute;left:179.20px;top:237.93px;font-size:8px;line-height:8px;white-space:pre;color:#333;transform:scaleX(0.825);transform-origin:left 0;text-shadow:0.3px 0 0 rgba(51,51,51,0.22);">1</div>
<div style="position:absolute;left:189.40px;top:237.93px;font-size:8px;line-height:8px;white-space:pre;color:#333;transform:scaleX(0.831);transform-origin:left 0;text-shadow:0.3px 0 0 rgba(51,51,51,0.22);">11.03.2010 /Do</div>
<div style="position:absolute;left:267.24px;top:237.93px;font-size:8px;line-height:8px;white-space:pre;color:#333;transform:scaleX(0.825);transform-origin:right 0;text-shadow:0.3px 0 0 rgba(51,51,51,0.22);">205</div>
<div style="position:absolute;left:285.00px;top:237.93px;font-size:8px;line-height:8px;white-space:pre;color:#333;transform:scaleX(0.802);transform-origin:left 0;text-shadow:0.3px 0 0 rgba(51,51,51,0.22);">Verrechnungskonto Teilzahlungen</div>
<div style="position:absolute;left:433.83px;top:237.93px;font-size:8px;line-height:8px;white-space:pre;color:#333;transform:scaleX(0.825);transform-origin:right 0;text-shadow:0.3px 0 0 rgba(51,51,51,0.22);">144,76</div>
<div style="position:absolute;left:530.62px;top:237.93px;font-size:8px;line-height:8px;white-space:pre;color:#333;transform:scaleX(0.825);transform-origin:right 0;text-shadow:0.3px 0 0 rgba(51,51,51,0.22);">33288,12</div>
<div style="position:absolute;left:573.62px;top:237.93px;font-size:8px;line-height:8px;white-space:pre;color:#333;transform:scaleX(0.825);transform-origin:right 0;text-shadow:0.3px 0 0 rgba(51,51,51,0.22);">9008/000</div>
<div style="position:absolute;left:612.30px;top:237.93px;font-size:8px;line-height:8px;white-space:pre;color:#333;transform:scaleX(0.844);transform-origin:left 0;text-shadow:0.3px 0 0 rgba(51,51,51,0.22);">0</div>
<div style="position:absolute;left:130px;top:246.70000000000002px;width:487.5px;height:11.5px;background:#fff;"></div>
<div style="position:absolute;left:138.5px;top:246.70000000000002px;width:1px;height:11.5px;background:#e2eaf6;"></div>
<div style="position:absolute;left:162.0px;top:246.70000000000002px;width:1px;height:11.5px;background:#e2eaf6;"></div>
<div style="position:absolute;left:176.0px;top:246.70000000000002px;width:1px;height:11.5px;background:#e2eaf6;"></div>
<div style="position:absolute;left:186.0px;top:246.70000000000002px;width:1px;height:11.5px;background:#e2eaf6;"></div>
<div style="position:absolute;left:239.0px;top:246.70000000000002px;width:1px;height:11.5px;background:#e2eaf6;"></div>
<div style="position:absolute;left:282.0px;top:246.70000000000002px;width:1px;height:11.5px;background:#e2eaf6;"></div>
<div style="position:absolute;left:407.0px;top:246.70000000000002px;width:1px;height:11.5px;background:#e2eaf6;"></div>
<div style="position:absolute;left:460.0px;top:246.70000000000002px;width:1px;height:11.5px;background:#e2eaf6;"></div>
<div style="position:absolute;left:512.0px;top:246.70000000000002px;width:1px;height:11.5px;background:#e2eaf6;"></div>
<div style="position:absolute;left:565.0px;top:246.70000000000002px;width:1px;height:11.5px;background:#e2eaf6;"></div>
<div style="position:absolute;left:608.0px;top:246.70000000000002px;width:1px;height:11.5px;background:#e2eaf6;"></div>
<div style="position:absolute;left:156.05px;top:249.33px;font-size:8px;line-height:8px;white-space:pre;color:#333;transform:scaleX(0.825);transform-origin:right 0;text-shadow:0.3px 0 0 rgba(51,51,51,0.22);">7</div>
<svg style="position:absolute;left:165.5px;top:248.9px" width="9" height="8" viewBox="0 0 9 8"><path d="M0.4 2 L3.6 0.3 L8.6 2.5 L5.4 4.5 Z" fill="#f0643a"/><path d="M0.4 2 L0.5 5 L5.4 7.8 L5.4 4.5 Z" fill="#d2401e"/><path d="M5.4 4.5 L8.6 2.5 L8.6 5.2 L5.4 7.8 Z" fill="#e9c0b0"/><path d="M5.4 7.8 L8.6 5.2 L8.6 2.5" fill="none" stroke="#7a1e10" stroke-width="0.7"/><path d="M5.6 6 L8.4 3.8" stroke="#b03020" stroke-width="0.5"/></svg>
<div style="position:absolute;left:179.20px;top:249.33px;font-size:8px;line-height:8px;white-space:pre;color:#333;transform:scaleX(0.825);transform-origin:left 0;text-shadow:0.3px 0 0 rgba(51,51,51,0.22);">1</div>
<div style="position:absolute;left:189.40px;top:249.33px;font-size:8px;line-height:8px;white-space:pre;color:#333;transform:scaleX(0.831);transform-origin:left 0;text-shadow:0.3px 0 0 rgba(51,51,51,0.22);">11.03.2010 /Do</div>
<div style="position:absolute;left:267.24px;top:249.33px;font-size:8px;line-height:8px;white-space:pre;color:#333;transform:scaleX(0.825);transform-origin:right 0;text-shadow:0.3px 0 0 rgba(51,51,51,0.22);">206</div>
<div style="position:absolute;left:285.00px;top:249.33px;font-size:8px;line-height:8px;white-space:pre;color:#333;transform:scaleX(0.802);transform-origin:left 0;text-shadow:0.3px 0 0 rgba(51,51,51,0.22);">Verrechnungskonto Teilzahlungen</div>
<div style="position:absolute;left:433.83px;top:249.33px;font-size:8px;line-height:8px;white-space:pre;color:#333;transform:scaleX(0.825);transform-origin:right 0;text-shadow:0.3px 0 0 rgba(51,51,51,0.22);">144,76</div>
<div style="position:absolute;left:530.62px;top:249.33px;font-size:8px;line-height:8px;white-space:pre;color:#333;transform:scaleX(0.825);transform-origin:right 0;text-shadow:0.3px 0 0 rgba(51,51,51,0.22);">33288,12</div>
<div style="position:absolute;left:573.62px;top:249.33px;font-size:8px;line-height:8px;white-space:pre;color:#333;transform:scaleX(0.825);transform-origin:right 0;text-shadow:0.3px 0 0 rgba(51,51,51,0.22);">9008/000</div>
<div style="position:absolute;left:612.30px;top:249.33px;font-size:8px;line-height:8px;white-space:pre;color:#333;transform:scaleX(0.844);transform-origin:left 0;text-shadow:0.3px 0 0 rgba(51,51,51,0.22);">0</div>
<div style="position:absolute;left:130px;top:258.1px;width:487.5px;height:11.5px;background:#dce7f8;"></div>
<div style="position:absolute;left:138.5px;top:258.1px;width:1px;height:11.5px;background:#eef3fb;"></div>
<div style="position:absolute;left:162.0px;top:258.1px;width:1px;height:11.5px;background:#eef3fb;"></div>
<div style="position:absolute;left:176.0px;top:258.1px;width:1px;height:11.5px;background:#eef3fb;"></div>
<div style="position:absolute;left:186.0px;top:258.1px;width:1px;height:11.5px;background:#eef3fb;"></div>
<div style="position:absolute;left:239.0px;top:258.1px;width:1px;height:11.5px;background:#eef3fb;"></div>
<div style="position:absolute;left:282.0px;top:258.1px;width:1px;height:11.5px;background:#eef3fb;"></div>
<div style="position:absolute;left:407.0px;top:258.1px;width:1px;height:11.5px;background:#eef3fb;"></div>
<div style="position:absolute;left:460.0px;top:258.1px;width:1px;height:11.5px;background:#eef3fb;"></div>
<div style="position:absolute;left:512.0px;top:258.1px;width:1px;height:11.5px;background:#eef3fb;"></div>
<div style="position:absolute;left:565.0px;top:258.1px;width:1px;height:11.5px;background:#eef3fb;"></div>
<div style="position:absolute;left:608.0px;top:258.1px;width:1px;height:11.5px;background:#eef3fb;"></div>
<div style="position:absolute;left:156.05px;top:260.73px;font-size:8px;line-height:8px;white-space:pre;color:#333;transform:scaleX(0.825);transform-origin:right 0;text-shadow:0.3px 0 0 rgba(51,51,51,0.22);">8</div>
<svg style="position:absolute;left:165.5px;top:260.3px" width="9" height="8" viewBox="0 0 9 8"><path d="M0.4 2 L3.6 0.3 L8.6 2.5 L5.4 4.5 Z" fill="#f0643a"/><path d="M0.4 2 L0.5 5 L5.4 7.8 L5.4 4.5 Z" fill="#d2401e"/><path d="M5.4 4.5 L8.6 2.5 L8.6 5.2 L5.4 7.8 Z" fill="#e9c0b0"/><path d="M5.4 7.8 L8.6 5.2 L8.6 2.5" fill="none" stroke="#7a1e10" stroke-width="0.7"/><path d="M5.6 6 L8.4 3.8" stroke="#b03020" stroke-width="0.5"/></svg>
<div style="position:absolute;left:179.20px;top:260.73px;font-size:8px;line-height:8px;white-space:pre;color:#333;transform:scaleX(0.825);transform-origin:left 0;text-shadow:0.3px 0 0 rgba(51,51,51,0.22);">1</div>
<div style="position:absolute;left:189.40px;top:260.73px;font-size:8px;line-height:8px;white-space:pre;color:#333;transform:scaleX(0.831);transform-origin:left 0;text-shadow:0.3px 0 0 rgba(51,51,51,0.22);">11.03.2010 /Do</div>
<div style="position:absolute;left:267.24px;top:260.73px;font-size:8px;line-height:8px;white-space:pre;color:#333;transform:scaleX(0.825);transform-origin:right 0;text-shadow:0.3px 0 0 rgba(51,51,51,0.22);">501</div>
<div style="position:absolute;left:285.00px;top:260.73px;font-size:8px;line-height:8px;white-space:pre;color:#333;transform:scaleX(0.802);transform-origin:left 0;text-shadow:0.3px 0 0 rgba(51,51,51,0.22);">Verrechnungskonto Teilzahlungen</div>
<div style="position:absolute;left:433.83px;top:260.73px;font-size:8px;line-height:8px;white-space:pre;color:#333;transform:scaleX(0.825);transform-origin:right 0;text-shadow:0.3px 0 0 rgba(51,51,51,0.22);">663,87</div>
<div style="position:absolute;left:530.62px;top:260.73px;font-size:8px;line-height:8px;white-space:pre;color:#333;transform:scaleX(0.825);transform-origin:right 0;text-shadow:0.3px 0 0 rgba(51,51,51,0.22);">33288,12</div>
<div style="position:absolute;left:573.62px;top:260.73px;font-size:8px;line-height:8px;white-space:pre;color:#333;transform:scaleX(0.825);transform-origin:right 0;text-shadow:0.3px 0 0 rgba(51,51,51,0.22);">9008/000</div>
<div style="position:absolute;left:612.30px;top:260.73px;font-size:8px;line-height:8px;white-space:pre;color:#333;transform:scaleX(0.844);transform-origin:left 0;text-shadow:0.3px 0 0 rgba(51,51,51,0.22);">0</div>
<div style="position:absolute;left:130px;top:269.5px;width:487.5px;height:11.5px;background:#fff;"></div>
<div style="position:absolute;left:138.5px;top:269.5px;width:1px;height:11.5px;background:#e2eaf6;"></div>
<div style="position:absolute;left:162.0px;top:269.5px;width:1px;height:11.5px;background:#e2eaf6;"></div>
<div style="position:absolute;left:176.0px;top:269.5px;width:1px;height:11.5px;background:#e2eaf6;"></div>
<div style="position:absolute;left:186.0px;top:269.5px;width:1px;height:11.5px;background:#e2eaf6;"></div>
<div style="position:absolute;left:239.0px;top:269.5px;width:1px;height:11.5px;background:#e2eaf6;"></div>
<div style="position:absolute;left:282.0px;top:269.5px;width:1px;height:11.5px;background:#e2eaf6;"></div>
<div style="position:absolute;left:407.0px;top:269.5px;width:1px;height:11.5px;background:#e2eaf6;"></div>
<div style="position:absolute;left:460.0px;top:269.5px;width:1px;height:11.5px;background:#e2eaf6;"></div>
<div style="position:absolute;left:512.0px;top:269.5px;width:1px;height:11.5px;background:#e2eaf6;"></div>
<div style="position:absolute;left:565.0px;top:269.5px;width:1px;height:11.5px;background:#e2eaf6;"></div>
<div style="position:absolute;left:608.0px;top:269.5px;width:1px;height:11.5px;background:#e2eaf6;"></div>
<div style="position:absolute;left:156.05px;top:272.13px;font-size:8px;line-height:8px;white-space:pre;color:#333;transform:scaleX(0.825);transform-origin:right 0;text-shadow:0.3px 0 0 rgba(51,51,51,0.22);">9</div>
<svg style="position:absolute;left:165.5px;top:271.7px" width="9" height="8" viewBox="0 0 9 8"><path d="M0.4 2 L3.6 0.3 L8.6 2.5 L5.4 4.5 Z" fill="#f0643a"/><path d="M0.4 2 L0.5 5 L5.4 7.8 L5.4 4.5 Z" fill="#d2401e"/><path d="M5.4 4.5 L8.6 2.5 L8.6 5.2 L5.4 7.8 Z" fill="#e9c0b0"/><path d="M5.4 7.8 L8.6 5.2 L8.6 2.5" fill="none" stroke="#7a1e10" stroke-width="0.7"/><path d="M5.6 6 L8.4 3.8" stroke="#b03020" stroke-width="0.5"/></svg>
<div style="position:absolute;left:179.20px;top:272.13px;font-size:8px;line-height:8px;white-space:pre;color:#333;transform:scaleX(0.825);transform-origin:left 0;text-shadow:0.3px 0 0 rgba(51,51,51,0.22);">1</div>
<div style="position:absolute;left:189.40px;top:272.13px;font-size:8px;line-height:8px;white-space:pre;color:#333;transform:scaleX(0.831);transform-origin:left 0;text-shadow:0.3px 0 0 rgba(51,51,51,0.22);">11.03.2010 /Do</div>
<div style="position:absolute;left:267.24px;top:272.13px;font-size:8px;line-height:8px;white-space:pre;color:#333;transform:scaleX(0.825);transform-origin:right 0;text-shadow:0.3px 0 0 rgba(51,51,51,0.22);">502</div>
<div style="position:absolute;left:285.00px;top:272.13px;font-size:8px;line-height:8px;white-space:pre;color:#333;transform:scaleX(0.802);transform-origin:left 0;text-shadow:0.3px 0 0 rgba(51,51,51,0.22);">Verrechnungskonto Teilzahlungen</div>
<div style="position:absolute;left:433.83px;top:272.13px;font-size:8px;line-height:8px;white-space:pre;color:#333;transform:scaleX(0.825);transform-origin:right 0;text-shadow:0.3px 0 0 rgba(51,51,51,0.22);">583,33</div>
<div style="position:absolute;left:530.62px;top:272.13px;font-size:8px;line-height:8px;white-space:pre;color:#333;transform:scaleX(0.825);transform-origin:right 0;text-shadow:0.3px 0 0 rgba(51,51,51,0.22);">33288,12</div>
<div style="position:absolute;left:573.62px;top:272.13px;font-size:8px;line-height:8px;white-space:pre;color:#333;transform:scaleX(0.825);transform-origin:right 0;text-shadow:0.3px 0 0 rgba(51,51,51,0.22);">9008/000</div>
<div style="position:absolute;left:612.30px;top:272.13px;font-size:8px;line-height:8px;white-space:pre;color:#333;transform:scaleX(0.844);transform-origin:left 0;text-shadow:0.3px 0 0 rgba(51,51,51,0.22);">0</div>
<div style="position:absolute;left:130px;top:280.90000000000003px;width:487.5px;height:11.5px;background:#dce7f8;"></div>
<div style="position:absolute;left:138.5px;top:280.90000000000003px;width:1px;height:11.5px;background:#eef3fb;"></div>
<div style="position:absolute;left:162.0px;top:280.90000000000003px;width:1px;height:11.5px;background:#eef3fb;"></div>
<div style="position:absolute;left:176.0px;top:280.90000000000003px;width:1px;height:11.5px;background:#eef3fb;"></div>
<div style="position:absolute;left:186.0px;top:280.90000000000003px;width:1px;height:11.5px;background:#eef3fb;"></div>
<div style="position:absolute;left:239.0px;top:280.90000000000003px;width:1px;height:11.5px;background:#eef3fb;"></div>
<div style="position:absolute;left:282.0px;top:280.90000000000003px;width:1px;height:11.5px;background:#eef3fb;"></div>
<div style="position:absolute;left:407.0px;top:280.90000000000003px;width:1px;height:11.5px;background:#eef3fb;"></div>
<div style="position:absolute;left:460.0px;top:280.90000000000003px;width:1px;height:11.5px;background:#eef3fb;"></div>
<div style="position:absolute;left:512.0px;top:280.90000000000003px;width:1px;height:11.5px;background:#eef3fb;"></div>
<div style="position:absolute;left:565.0px;top:280.90000000000003px;width:1px;height:11.5px;background:#eef3fb;"></div>
<div style="position:absolute;left:608.0px;top:280.90000000000003px;width:1px;height:11.5px;background:#eef3fb;"></div>
<div style="position:absolute;left:151.59px;top:283.53px;font-size:8px;line-height:8px;white-space:pre;color:#333;transform:scaleX(0.825);transform-origin:right 0;text-shadow:0.3px 0 0 rgba(51,51,51,0.22);">10</div>
<svg style="position:absolute;left:165.5px;top:283.1px" width="9" height="8" viewBox="0 0 9 8"><path d="M0.4 2 L3.6 0.3 L8.6 2.5 L5.4 4.5 Z" fill="#f0643a"/><path d="M0.4 2 L0.5 5 L5.4 7.8 L5.4 4.5 Z" fill="#d2401e"/><path d="M5.4 4.5 L8.6 2.5 L8.6 5.2 L5.4 7.8 Z" fill="#e9c0b0"/><path d="M5.4 7.8 L8.6 5.2 L8.6 2.5" fill="none" stroke="#7a1e10" stroke-width="0.7"/><path d="M5.6 6 L8.4 3.8" stroke="#b03020" stroke-width="0.5"/></svg>
<div style="position:absolute;left:179.20px;top:283.53px;font-size:8px;line-height:8px;white-space:pre;color:#333;transform:scaleX(0.825);transform-origin:left 0;text-shadow:0.3px 0 0 rgba(51,51,51,0.22);">1</div>
<div style="position:absolute;left:189.40px;top:283.53px;font-size:8px;line-height:8px;white-space:pre;color:#333;transform:scaleX(0.831);transform-origin:left 0;text-shadow:0.3px 0 0 rgba(51,51,51,0.22);">11.03.2010 /Do</div>
<div style="position:absolute;left:267.24px;top:283.53px;font-size:8px;line-height:8px;white-space:pre;color:#333;transform:scaleX(0.825);transform-origin:right 0;text-shadow:0.3px 0 0 rgba(51,51,51,0.22);">503</div>
<div style="position:absolute;left:285.00px;top:283.53px;font-size:8px;line-height:8px;white-space:pre;color:#333;transform:scaleX(0.802);transform-origin:left 0;text-shadow:0.3px 0 0 rgba(51,51,51,0.22);">Verrechnungskonto Teilzahlungen</div>
<div style="position:absolute;left:433.83px;top:283.53px;font-size:8px;line-height:8px;white-space:pre;color:#333;transform:scaleX(0.825);transform-origin:right 0;text-shadow:0.3px 0 0 rgba(51,51,51,0.22);">583,33</div>
<div style="position:absolute;left:530.62px;top:283.53px;font-size:8px;line-height:8px;white-space:pre;color:#333;transform:scaleX(0.825);transform-origin:right 0;text-shadow:0.3px 0 0 rgba(51,51,51,0.22);">33288,12</div>
<div style="position:absolute;left:573.62px;top:283.53px;font-size:8px;line-height:8px;white-space:pre;color:#333;transform:scaleX(0.825);transform-origin:right 0;text-shadow:0.3px 0 0 rgba(51,51,51,0.22);">9008/000</div>
<div style="position:absolute;left:612.30px;top:283.53px;font-size:8px;line-height:8px;white-space:pre;color:#333;transform:scaleX(0.844);transform-origin:left 0;text-shadow:0.3px 0 0 rgba(51,51,51,0.22);">0</div>
<div style="position:absolute;left:130px;top:292.3px;width:487.5px;height:11.5px;background:#fff;"></div>
<div style="position:absolute;left:138.5px;top:292.3px;width:1px;height:11.5px;background:#e2eaf6;"></div>
<div style="position:absolute;left:162.0px;top:292.3px;width:1px;height:11.5px;background:#e2eaf6;"></div>
<div style="position:absolute;left:176.0px;top:292.3px;width:1px;height:11.5px;background:#e2eaf6;"></div>
<div style="position:absolute;left:186.0px;top:292.3px;width:1px;height:11.5px;background:#e2eaf6;"></div>
<div style="position:absolute;left:239.0px;top:292.3px;width:1px;height:11.5px;background:#e2eaf6;"></div>
<div style="position:absolute;left:282.0px;top:292.3px;width:1px;height:11.5px;background:#e2eaf6;"></div>
<div style="position:absolute;left:407.0px;top:292.3px;width:1px;height:11.5px;background:#e2eaf6;"></div>
<div style="position:absolute;left:460.0px;top:292.3px;width:1px;height:11.5px;background:#e2eaf6;"></div>
<div style="position:absolute;left:512.0px;top:292.3px;width:1px;height:11.5px;background:#e2eaf6;"></div>
<div style="position:absolute;left:565.0px;top:292.3px;width:1px;height:11.5px;background:#e2eaf6;"></div>
<div style="position:absolute;left:608.0px;top:292.3px;width:1px;height:11.5px;background:#e2eaf6;"></div>
<div style="position:absolute;left:152.19px;top:294.93px;font-size:8px;line-height:8px;white-space:pre;color:#333;transform:scaleX(0.825);transform-origin:right 0;text-shadow:0.3px 0 0 rgba(51,51,51,0.22);">11</div>
<svg style="position:absolute;left:165.5px;top:294.5px" width="9" height="8" viewBox="0 0 9 8"><path d="M0.4 2 L3.6 0.3 L8.6 2.5 L5.4 4.5 Z" fill="#f0643a"/><path d="M0.4 2 L0.5 5 L5.4 7.8 L5.4 4.5 Z" fill="#d2401e"/><path d="M5.4 4.5 L8.6 2.5 L8.6 5.2 L5.4 7.8 Z" fill="#e9c0b0"/><path d="M5.4 7.8 L8.6 5.2 L8.6 2.5" fill="none" stroke="#7a1e10" stroke-width="0.7"/><path d="M5.6 6 L8.4 3.8" stroke="#b03020" stroke-width="0.5"/></svg>
<div style="position:absolute;left:179.20px;top:294.93px;font-size:8px;line-height:8px;white-space:pre;color:#333;transform:scaleX(0.825);transform-origin:left 0;text-shadow:0.3px 0 0 rgba(51,51,51,0.22);">1</div>
<div style="position:absolute;left:189.40px;top:294.93px;font-size:8px;line-height:8px;white-space:pre;color:#333;transform:scaleX(0.831);transform-origin:left 0;text-shadow:0.3px 0 0 rgba(51,51,51,0.22);">11.03.2010 /Do</div>
<div style="position:absolute;left:267.24px;top:294.93px;font-size:8px;line-height:8px;white-space:pre;color:#333;transform:scaleX(0.825);transform-origin:right 0;text-shadow:0.3px 0 0 rgba(51,51,51,0.22);">504</div>
<div style="position:absolute;left:285.00px;top:294.93px;font-size:8px;line-height:8px;white-space:pre;color:#333;transform:scaleX(0.802);transform-origin:left 0;text-shadow:0.3px 0 0 rgba(51,51,51,0.22);">Verrechnungskonto Teilzahlungen</div>
<div style="position:absolute;left:433.83px;top:294.93px;font-size:8px;line-height:8px;white-space:pre;color:#333;transform:scaleX(0.825);transform-origin:right 0;text-shadow:0.3px 0 0 rgba(51,51,51,0.22);">583,33</div>
<div style="position:absolute;left:530.62px;top:294.93px;font-size:8px;line-height:8px;white-space:pre;color:#333;transform:scaleX(0.825);transform-origin:right 0;text-shadow:0.3px 0 0 rgba(51,51,51,0.22);">33288,12</div>
<div style="position:absolute;left:573.62px;top:294.93px;font-size:8px;line-height:8px;white-space:pre;color:#333;transform:scaleX(0.825);transform-origin:right 0;text-shadow:0.3px 0 0 rgba(51,51,51,0.22);">9008/000</div>
<div style="position:absolute;left:612.30px;top:294.93px;font-size:8px;line-height:8px;white-space:pre;color:#333;transform:scaleX(0.844);transform-origin:left 0;text-shadow:0.3px 0 0 rgba(51,51,51,0.22);">0</div>
<div style="position:absolute;left:130px;top:303.70000000000005px;width:487.5px;height:11.5px;background:#dce7f8;"></div>
<div style="position:absolute;left:138.5px;top:303.70000000000005px;width:1px;height:11.5px;background:#eef3fb;"></div>
<div style="position:absolute;left:162.0px;top:303.70000000000005px;width:1px;height:11.5px;background:#eef3fb;"></div>
<div style="position:absolute;left:176.0px;top:303.70000000000005px;width:1px;height:11.5px;background:#eef3fb;"></div>
<div style="position:absolute;left:186.0px;top:303.70000000000005px;width:1px;height:11.5px;background:#eef3fb;"></div>
<div style="position:absolute;left:239.0px;top:303.70000000000005px;width:1px;height:11.5px;background:#eef3fb;"></div>
<div style="position:absolute;left:282.0px;top:303.70000000000005px;width:1px;height:11.5px;background:#eef3fb;"></div>
<div style="position:absolute;left:407.0px;top:303.70000000000005px;width:1px;height:11.5px;background:#eef3fb;"></div>
<div style="position:absolute;left:460.0px;top:303.70000000000005px;width:1px;height:11.5px;background:#eef3fb;"></div>
<div style="position:absolute;left:512.0px;top:303.70000000000005px;width:1px;height:11.5px;background:#eef3fb;"></div>
<div style="position:absolute;left:565.0px;top:303.70000000000005px;width:1px;height:11.5px;background:#eef3fb;"></div>
<div style="position:absolute;left:608.0px;top:303.70000000000005px;width:1px;height:11.5px;background:#eef3fb;"></div>
<div style="position:absolute;left:151.59px;top:306.33px;font-size:8px;line-height:8px;white-space:pre;color:#333;transform:scaleX(0.825);transform-origin:right 0;text-shadow:0.3px 0 0 rgba(51,51,51,0.22);">12</div>
<svg style="position:absolute;left:165.5px;top:305.90000000000003px" width="9" height="8" viewBox="0 0 9 8"><path d="M0.4 2 L3.6 0.3 L8.6 2.5 L5.4 4.5 Z" fill="#f0643a"/><path d="M0.4 2 L0.5 5 L5.4 7.8 L5.4 4.5 Z" fill="#d2401e"/><path d="M5.4 4.5 L8.6 2.5 L8.6 5.2 L5.4 7.8 Z" fill="#e9c0b0"/><path d="M5.4 7.8 L8.6 5.2 L8.6 2.5" fill="none" stroke="#7a1e10" stroke-width="0.7"/><path d="M5.6 6 L8.4 3.8" stroke="#b03020" stroke-width="0.5"/></svg>
<div style="position:absolute;left:179.20px;top:306.33px;font-size:8px;line-height:8px;white-space:pre;color:#333;transform:scaleX(0.825);transform-origin:left 0;text-shadow:0.3px 0 0 rgba(51,51,51,0.22);">1</div>
<div style="position:absolute;left:189.40px;top:306.33px;font-size:8px;line-height:8px;white-space:pre;color:#333;transform:scaleX(0.831);transform-origin:left 0;text-shadow:0.3px 0 0 rgba(51,51,51,0.22);">11.03.2010 /Do</div>
<div style="position:absolute;left:267.24px;top:306.33px;font-size:8px;line-height:8px;white-space:pre;color:#333;transform:scaleX(0.825);transform-origin:right 0;text-shadow:0.3px 0 0 rgba(51,51,51,0.22);">505</div>
<div style="position:absolute;left:285.00px;top:306.33px;font-size:8px;line-height:8px;white-space:pre;color:#333;transform:scaleX(0.802);transform-origin:left 0;text-shadow:0.3px 0 0 rgba(51,51,51,0.22);">Verrechnungskonto Teilzahlungen</div>
<div style="position:absolute;left:433.83px;top:306.33px;font-size:8px;line-height:8px;white-space:pre;color:#333;transform:scaleX(0.825);transform-origin:right 0;text-shadow:0.3px 0 0 rgba(51,51,51,0.22);">583,33</div>
<div style="position:absolute;left:530.62px;top:306.33px;font-size:8px;line-height:8px;white-space:pre;color:#333;transform:scaleX(0.825);transform-origin:right 0;text-shadow:0.3px 0 0 rgba(51,51,51,0.22);">33288,12</div>
<div style="position:absolute;left:573.62px;top:306.33px;font-size:8px;line-height:8px;white-space:pre;color:#333;transform:scaleX(0.825);transform-origin:right 0;text-shadow:0.3px 0 0 rgba(51,51,51,0.22);">9008/000</div>
<div style="position:absolute;left:612.30px;top:306.33px;font-size:8px;line-height:8px;white-space:pre;color:#333;transform:scaleX(0.844);transform-origin:left 0;text-shadow:0.3px 0 0 rgba(51,51,51,0.22);">0</div>
<div style="position:absolute;left:130px;top:315.1px;width:487.5px;height:11.5px;background:#fff;"></div>
<div style="position:absolute;left:138.5px;top:315.1px;width:1px;height:11.5px;background:#e2eaf6;"></div>
<div style="position:absolute;left:162.0px;top:315.1px;width:1px;height:11.5px;background:#e2eaf6;"></div>
<div style="position:absolute;left:176.0px;top:315.1px;width:1px;height:11.5px;background:#e2eaf6;"></div>
<div style="position:absolute;left:186.0px;top:315.1px;width:1px;height:11.5px;background:#e2eaf6;"></div>
<div style="position:absolute;left:239.0px;top:315.1px;width:1px;height:11.5px;background:#e2eaf6;"></div>
<div style="position:absolute;left:282.0px;top:315.1px;width:1px;height:11.5px;background:#e2eaf6;"></div>
<div style="position:absolute;left:407.0px;top:315.1px;width:1px;height:11.5px;background:#e2eaf6;"></div>
<div style="position:absolute;left:460.0px;top:315.1px;width:1px;height:11.5px;background:#e2eaf6;"></div>
<div style="position:absolute;left:512.0px;top:315.1px;width:1px;height:11.5px;background:#e2eaf6;"></div>
<div style="position:absolute;left:565.0px;top:315.1px;width:1px;height:11.5px;background:#e2eaf6;"></div>
<div style="position:absolute;left:608.0px;top:315.1px;width:1px;height:11.5px;background:#e2eaf6;"></div>
<div style="position:absolute;left:151.59px;top:317.73px;font-size:8px;line-height:8px;white-space:pre;color:#333;transform:scaleX(0.825);transform-origin:right 0;text-shadow:0.3px 0 0 rgba(51,51,51,0.22);">13</div>
<svg style="position:absolute;left:165.5px;top:317.3px" width="9" height="8" viewBox="0 0 9 8"><path d="M0.4 2 L3.6 0.3 L8.6 2.5 L5.4 4.5 Z" fill="#f0643a"/><path d="M0.4 2 L0.5 5 L5.4 7.8 L5.4 4.5 Z" fill="#d2401e"/><path d="M5.4 4.5 L8.6 2.5 L8.6 5.2 L5.4 7.8 Z" fill="#e9c0b0"/><path d="M5.4 7.8 L8.6 5.2 L8.6 2.5" fill="none" stroke="#7a1e10" stroke-width="0.7"/><path d="M5.6 6 L8.4 3.8" stroke="#b03020" stroke-width="0.5"/></svg>
<div style="position:absolute;left:179.20px;top:317.73px;font-size:8px;line-height:8px;white-space:pre;color:#333;transform:scaleX(0.825);transform-origin:left 0;text-shadow:0.3px 0 0 rgba(51,51,51,0.22);">1</div>
<div style="position:absolute;left:189.40px;top:317.73px;font-size:8px;line-height:8px;white-space:pre;color:#333;transform:scaleX(0.831);transform-origin:left 0;text-shadow:0.3px 0 0 rgba(51,51,51,0.22);">11.03.2010 /Do</div>
<div style="position:absolute;left:267.24px;top:317.73px;font-size:8px;line-height:8px;white-space:pre;color:#333;transform:scaleX(0.825);transform-origin:right 0;text-shadow:0.3px 0 0 rgba(51,51,51,0.22);">506</div>
<div style="position:absolute;left:285.00px;top:317.73px;font-size:8px;line-height:8px;white-space:pre;color:#333;transform:scaleX(0.802);transform-origin:left 0;text-shadow:0.3px 0 0 rgba(51,51,51,0.22);">Verrechnungskonto Teilzahlungen</div>
<div style="position:absolute;left:433.83px;top:317.73px;font-size:8px;line-height:8px;white-space:pre;color:#333;transform:scaleX(0.825);transform-origin:right 0;text-shadow:0.3px 0 0 rgba(51,51,51,0.22);">583,33</div>
<div style="position:absolute;left:530.62px;top:317.73px;font-size:8px;line-height:8px;white-space:pre;color:#333;transform:scaleX(0.825);transform-origin:right 0;text-shadow:0.3px 0 0 rgba(51,51,51,0.22);">33288,12</div>
<div style="position:absolute;left:573.62px;top:317.73px;font-size:8px;line-height:8px;white-space:pre;color:#333;transform:scaleX(0.825);transform-origin:right 0;text-shadow:0.3px 0 0 rgba(51,51,51,0.22);">9008/000</div>
<div style="position:absolute;left:612.30px;top:317.73px;font-size:8px;line-height:8px;white-space:pre;color:#333;transform:scaleX(0.844);transform-origin:left 0;text-shadow:0.3px 0 0 rgba(51,51,51,0.22);">0</div>
<div style="position:absolute;left:130px;top:326.5px;width:487.5px;height:11.5px;background:#dce7f8;"></div>
<div style="position:absolute;left:138.5px;top:326.5px;width:1px;height:11.5px;background:#eef3fb;"></div>
<div style="position:absolute;left:162.0px;top:326.5px;width:1px;height:11.5px;background:#eef3fb;"></div>
<div style="position:absolute;left:176.0px;top:326.5px;width:1px;height:11.5px;background:#eef3fb;"></div>
<div style="position:absolute;left:186.0px;top:326.5px;width:1px;height:11.5px;background:#eef3fb;"></div>
<div style="position:absolute;left:239.0px;top:326.5px;width:1px;height:11.5px;background:#eef3fb;"></div>
<div style="position:absolute;left:282.0px;top:326.5px;width:1px;height:11.5px;background:#eef3fb;"></div>
<div style="position:absolute;left:407.0px;top:326.5px;width:1px;height:11.5px;background:#eef3fb;"></div>
<div style="position:absolute;left:460.0px;top:326.5px;width:1px;height:11.5px;background:#eef3fb;"></div>
<div style="position:absolute;left:512.0px;top:326.5px;width:1px;height:11.5px;background:#eef3fb;"></div>
<div style="position:absolute;left:565.0px;top:326.5px;width:1px;height:11.5px;background:#eef3fb;"></div>
<div style="position:absolute;left:608.0px;top:326.5px;width:1px;height:11.5px;background:#eef3fb;"></div>
<div style="position:absolute;left:151.59px;top:329.13px;font-size:8px;line-height:8px;white-space:pre;color:#333;transform:scaleX(0.825);transform-origin:right 0;text-shadow:0.3px 0 0 rgba(51,51,51,0.22);">14</div>
<svg style="position:absolute;left:165.5px;top:328.7px" width="9" height="8" viewBox="0 0 9 8"><path d="M0.4 2 L3.6 0.3 L8.6 2.5 L5.4 4.5 Z" fill="#f0643a"/><path d="M0.4 2 L0.5 5 L5.4 7.8 L5.4 4.5 Z" fill="#d2401e"/><path d="M5.4 4.5 L8.6 2.5 L8.6 5.2 L5.4 7.8 Z" fill="#e9c0b0"/><path d="M5.4 7.8 L8.6 5.2 L8.6 2.5" fill="none" stroke="#7a1e10" stroke-width="0.7"/><path d="M5.6 6 L8.4 3.8" stroke="#b03020" stroke-width="0.5"/></svg>
<div style="position:absolute;left:179.20px;top:329.13px;font-size:8px;line-height:8px;white-space:pre;color:#333;transform:scaleX(0.825);transform-origin:left 0;text-shadow:0.3px 0 0 rgba(51,51,51,0.22);">1</div>
<div style="position:absolute;left:189.40px;top:329.13px;font-size:8px;line-height:8px;white-space:pre;color:#333;transform:scaleX(0.831);transform-origin:left 0;text-shadow:0.3px 0 0 rgba(51,51,51,0.22);">11.03.2010 /Do</div>
<div style="position:absolute;left:267.24px;top:329.13px;font-size:8px;line-height:8px;white-space:pre;color:#333;transform:scaleX(0.825);transform-origin:right 0;text-shadow:0.3px 0 0 rgba(51,51,51,0.22);">507</div>
<div style="position:absolute;left:285.00px;top:329.13px;font-size:8px;line-height:8px;white-space:pre;color:#333;transform:scaleX(0.802);transform-origin:left 0;text-shadow:0.3px 0 0 rgba(51,51,51,0.22);">Verrechnungskonto Teilzahlungen</div>
<div style="position:absolute;left:433.83px;top:329.13px;font-size:8px;line-height:8px;white-space:pre;color:#333;transform:scaleX(0.825);transform-origin:right 0;text-shadow:0.3px 0 0 rgba(51,51,51,0.22);">583,33</div>
<div style="position:absolute;left:530.62px;top:329.13px;font-size:8px;line-height:8px;white-space:pre;color:#333;transform:scaleX(0.825);transform-origin:right 0;text-shadow:0.3px 0 0 rgba(51,51,51,0.22);">33288,12</div>
<div style="position:absolute;left:573.62px;top:329.13px;font-size:8px;line-height:8px;white-space:pre;color:#333;transform:scaleX(0.825);transform-origin:right 0;text-shadow:0.3px 0 0 rgba(51,51,51,0.22);">9008/000</div>
<div style="position:absolute;left:612.30px;top:329.13px;font-size:8px;line-height:8px;white-space:pre;color:#333;transform:scaleX(0.844);transform-origin:left 0;text-shadow:0.3px 0 0 rgba(51,51,51,0.22);">0</div>
<div style="position:absolute;left:130px;top:337.9px;width:487.5px;height:11.5px;background:#fff;"></div>
<div style="position:absolute;left:138.5px;top:337.9px;width:1px;height:11.5px;background:#e2eaf6;"></div>
<div style="position:absolute;left:162.0px;top:337.9px;width:1px;height:11.5px;background:#e2eaf6;"></div>
<div style="position:absolute;left:176.0px;top:337.9px;width:1px;height:11.5px;background:#e2eaf6;"></div>
<div style="position:absolute;left:186.0px;top:337.9px;width:1px;height:11.5px;background:#e2eaf6;"></div>
<div style="position:absolute;left:239.0px;top:337.9px;width:1px;height:11.5px;background:#e2eaf6;"></div>
<div style="position:absolute;left:282.0px;top:337.9px;width:1px;height:11.5px;background:#e2eaf6;"></div>
<div style="position:absolute;left:407.0px;top:337.9px;width:1px;height:11.5px;background:#e2eaf6;"></div>
<div style="position:absolute;left:460.0px;top:337.9px;width:1px;height:11.5px;background:#e2eaf6;"></div>
<div style="position:absolute;left:512.0px;top:337.9px;width:1px;height:11.5px;background:#e2eaf6;"></div>
<div style="position:absolute;left:565.0px;top:337.9px;width:1px;height:11.5px;background:#e2eaf6;"></div>
<div style="position:absolute;left:608.0px;top:337.9px;width:1px;height:11.5px;background:#e2eaf6;"></div>
<div style="position:absolute;left:151.59px;top:340.53px;font-size:8px;line-height:8px;white-space:pre;color:#333;transform:scaleX(0.825);transform-origin:right 0;text-shadow:0.3px 0 0 rgba(51,51,51,0.22);">15</div>
<svg style="position:absolute;left:165.5px;top:340.09999999999997px" width="9" height="8" viewBox="0 0 9 8"><path d="M0.4 2 L3.6 0.3 L8.6 2.5 L5.4 4.5 Z" fill="#f0643a"/><path d="M0.4 2 L0.5 5 L5.4 7.8 L5.4 4.5 Z" fill="#d2401e"/><path d="M5.4 4.5 L8.6 2.5 L8.6 5.2 L5.4 7.8 Z" fill="#e9c0b0"/><path d="M5.4 7.8 L8.6 5.2 L8.6 2.5" fill="none" stroke="#7a1e10" stroke-width="0.7"/><path d="M5.6 6 L8.4 3.8" stroke="#b03020" stroke-width="0.5"/></svg>
<div style="position:absolute;left:179.20px;top:340.53px;font-size:8px;line-height:8px;white-space:pre;color:#333;transform:scaleX(0.825);transform-origin:left 0;text-shadow:0.3px 0 0 rgba(51,51,51,0.22);">1</div>
<div style="position:absolute;left:189.40px;top:340.53px;font-size:8px;line-height:8px;white-space:pre;color:#333;transform:scaleX(0.831);transform-origin:left 0;text-shadow:0.3px 0 0 rgba(51,51,51,0.22);">11.03.2010 /Do</div>
<div style="position:absolute;left:267.24px;top:340.53px;font-size:8px;line-height:8px;white-space:pre;color:#333;transform:scaleX(0.825);transform-origin:right 0;text-shadow:0.3px 0 0 rgba(51,51,51,0.22);">508</div>
<div style="position:absolute;left:285.00px;top:340.53px;font-size:8px;line-height:8px;white-space:pre;color:#333;transform:scaleX(0.802);transform-origin:left 0;text-shadow:0.3px 0 0 rgba(51,51,51,0.22);">Verrechnungskonto Teilzahlungen</div>
<div style="position:absolute;left:433.83px;top:340.53px;font-size:8px;line-height:8px;white-space:pre;color:#333;transform:scaleX(0.825);transform-origin:right 0;text-shadow:0.3px 0 0 rgba(51,51,51,0.22);">583,33</div>
<div style="position:absolute;left:530.62px;top:340.53px;font-size:8px;line-height:8px;white-space:pre;color:#333;transform:scaleX(0.825);transform-origin:right 0;text-shadow:0.3px 0 0 rgba(51,51,51,0.22);">33288,12</div>
<div style="position:absolute;left:573.62px;top:340.53px;font-size:8px;line-height:8px;white-space:pre;color:#333;transform:scaleX(0.825);transform-origin:right 0;text-shadow:0.3px 0 0 rgba(51,51,51,0.22);">9008/000</div>
<div style="position:absolute;left:612.30px;top:340.53px;font-size:8px;line-height:8px;white-space:pre;color:#333;transform:scaleX(0.844);transform-origin:left 0;text-shadow:0.3px 0 0 rgba(51,51,51,0.22);">0</div>
<div style="position:absolute;left:130px;top:349.3px;width:487.5px;height:11.5px;background:#dce7f8;"></div>
<div style="position:absolute;left:138.5px;top:349.3px;width:1px;height:11.5px;background:#eef3fb;"></div>
<div style="position:absolute;left:162.0px;top:349.3px;width:1px;height:11.5px;background:#eef3fb;"></div>
<div style="position:absolute;left:176.0px;top:349.3px;width:1px;height:11.5px;background:#eef3fb;"></div>
<div style="position:absolute;left:186.0px;top:349.3px;width:1px;height:11.5px;background:#eef3fb;"></div>
<div style="position:absolute;left:239.0px;top:349.3px;width:1px;height:11.5px;background:#eef3fb;"></div>
<div style="position:absolute;left:282.0px;top:349.3px;width:1px;height:11.5px;background:#eef3fb;"></div>
<div style="position:absolute;left:407.0px;top:349.3px;width:1px;height:11.5px;background:#eef3fb;"></div>
<div style="position:absolute;left:460.0px;top:349.3px;width:1px;height:11.5px;background:#eef3fb;"></div>
<div style="position:absolute;left:512.0px;top:349.3px;width:1px;height:11.5px;background:#eef3fb;"></div>
<div style="position:absolute;left:565.0px;top:349.3px;width:1px;height:11.5px;background:#eef3fb;"></div>
<div style="position:absolute;left:608.0px;top:349.3px;width:1px;height:11.5px;background:#eef3fb;"></div>
<div style="position:absolute;left:151.59px;top:351.93px;font-size:8px;line-height:8px;white-space:pre;color:#333;transform:scaleX(0.825);transform-origin:right 0;text-shadow:0.3px 0 0 rgba(51,51,51,0.22);">16</div>
<svg style="position:absolute;left:165.5px;top:351.5px" width="9" height="8" viewBox="0 0 9 8"><path d="M0.4 2 L3.6 0.3 L8.6 2.5 L5.4 4.5 Z" fill="#f0643a"/><path d="M0.4 2 L0.5 5 L5.4 7.8 L5.4 4.5 Z" fill="#d2401e"/><path d="M5.4 4.5 L8.6 2.5 L8.6 5.2 L5.4 7.8 Z" fill="#e9c0b0"/><path d="M5.4 7.8 L8.6 5.2 L8.6 2.5" fill="none" stroke="#7a1e10" stroke-width="0.7"/><path d="M5.6 6 L8.4 3.8" stroke="#b03020" stroke-width="0.5"/></svg>
<div style="position:absolute;left:179.20px;top:351.93px;font-size:8px;line-height:8px;white-space:pre;color:#333;transform:scaleX(0.825);transform-origin:left 0;text-shadow:0.3px 0 0 rgba(51,51,51,0.22);">1</div>
<div style="position:absolute;left:189.40px;top:351.93px;font-size:8px;line-height:8px;white-space:pre;color:#333;transform:scaleX(0.831);transform-origin:left 0;text-shadow:0.3px 0 0 rgba(51,51,51,0.22);">11.03.2010 /Do</div>
<div style="position:absolute;left:267.24px;top:351.93px;font-size:8px;line-height:8px;white-space:pre;color:#333;transform:scaleX(0.825);transform-origin:right 0;text-shadow:0.3px 0 0 rgba(51,51,51,0.22);">509</div>
<div style="position:absolute;left:285.00px;top:351.93px;font-size:8px;line-height:8px;white-space:pre;color:#333;transform:scaleX(0.802);transform-origin:left 0;text-shadow:0.3px 0 0 rgba(51,51,51,0.22);">Verrechnungskonto Teilzahlungen</div>
<div style="position:absolute;left:433.83px;top:351.93px;font-size:8px;line-height:8px;white-space:pre;color:#333;transform:scaleX(0.825);transform-origin:right 0;text-shadow:0.3px 0 0 rgba(51,51,51,0.22);">583,33</div>
<div style="position:absolute;left:530.62px;top:351.93px;font-size:8px;line-height:8px;white-space:pre;color:#333;transform:scaleX(0.825);transform-origin:right 0;text-shadow:0.3px 0 0 rgba(51,51,51,0.22);">33288,12</div>
<div style="position:absolute;left:573.62px;top:351.93px;font-size:8px;line-height:8px;white-space:pre;color:#333;transform:scaleX(0.825);transform-origin:right 0;text-shadow:0.3px 0 0 rgba(51,51,51,0.22);">9008/000</div>
<div style="position:absolute;left:612.30px;top:351.93px;font-size:8px;line-height:8px;white-space:pre;color:#333;transform:scaleX(0.844);transform-origin:left 0;text-shadow:0.3px 0 0 rgba(51,51,51,0.22);">0</div>
<div style="position:absolute;left:130px;top:360.70000000000005px;width:487.5px;height:11.5px;background:#fff;"></div>
<div style="position:absolute;left:138.5px;top:360.70000000000005px;width:1px;height:11.5px;background:#e2eaf6;"></div>
<div style="position:absolute;left:162.0px;top:360.70000000000005px;width:1px;height:11.5px;background:#e2eaf6;"></div>
<div style="position:absolute;left:176.0px;top:360.70000000000005px;width:1px;height:11.5px;background:#e2eaf6;"></div>
<div style="position:absolute;left:186.0px;top:360.70000000000005px;width:1px;height:11.5px;background:#e2eaf6;"></div>
<div style="position:absolute;left:239.0px;top:360.70000000000005px;width:1px;height:11.5px;background:#e2eaf6;"></div>
<div style="position:absolute;left:282.0px;top:360.70000000000005px;width:1px;height:11.5px;background:#e2eaf6;"></div>
<div style="position:absolute;left:407.0px;top:360.70000000000005px;width:1px;height:11.5px;background:#e2eaf6;"></div>
<div style="position:absolute;left:460.0px;top:360.70000000000005px;width:1px;height:11.5px;background:#e2eaf6;"></div>
<div style="position:absolute;left:512.0px;top:360.70000000000005px;width:1px;height:11.5px;background:#e2eaf6;"></div>
<div style="position:absolute;left:565.0px;top:360.70000000000005px;width:1px;height:11.5px;background:#e2eaf6;"></div>
<div style="position:absolute;left:608.0px;top:360.70000000000005px;width:1px;height:11.5px;background:#e2eaf6;"></div>
<div style="position:absolute;left:151.59px;top:363.33px;font-size:8px;line-height:8px;white-space:pre;color:#333;transform:scaleX(0.825);transform-origin:right 0;text-shadow:0.3px 0 0 rgba(51,51,51,0.22);">17</div>
<svg style="position:absolute;left:165.5px;top:362.90000000000003px" width="9" height="8" viewBox="0 0 9 8"><path d="M0.4 2 L3.6 0.3 L8.6 2.5 L5.4 4.5 Z" fill="#f0643a"/><path d="M0.4 2 L0.5 5 L5.4 7.8 L5.4 4.5 Z" fill="#d2401e"/><path d="M5.4 4.5 L8.6 2.5 L8.6 5.2 L5.4 7.8 Z" fill="#e9c0b0"/><path d="M5.4 7.8 L8.6 5.2 L8.6 2.5" fill="none" stroke="#7a1e10" stroke-width="0.7"/><path d="M5.6 6 L8.4 3.8" stroke="#b03020" stroke-width="0.5"/></svg>
<div style="position:absolute;left:179.20px;top:363.33px;font-size:8px;line-height:8px;white-space:pre;color:#333;transform:scaleX(0.825);transform-origin:left 0;text-shadow:0.3px 0 0 rgba(51,51,51,0.22);">1</div>
<div style="position:absolute;left:189.40px;top:363.33px;font-size:8px;line-height:8px;white-space:pre;color:#333;transform:scaleX(0.831);transform-origin:left 0;text-shadow:0.3px 0 0 rgba(51,51,51,0.22);">11.03.2010 /Do</div>
<div style="position:absolute;left:267.24px;top:363.33px;font-size:8px;line-height:8px;white-space:pre;color:#333;transform:scaleX(0.825);transform-origin:right 0;text-shadow:0.3px 0 0 rgba(51,51,51,0.22);">510</div>
<div style="position:absolute;left:285.00px;top:363.33px;font-size:8px;line-height:8px;white-space:pre;color:#333;transform:scaleX(0.802);transform-origin:left 0;text-shadow:0.3px 0 0 rgba(51,51,51,0.22);">Verrechnungskonto Teilzahlungen</div>
<div style="position:absolute;left:433.83px;top:363.33px;font-size:8px;line-height:8px;white-space:pre;color:#333;transform:scaleX(0.825);transform-origin:right 0;text-shadow:0.3px 0 0 rgba(51,51,51,0.22);">583,33</div>
<div style="position:absolute;left:530.62px;top:363.33px;font-size:8px;line-height:8px;white-space:pre;color:#333;transform:scaleX(0.825);transform-origin:right 0;text-shadow:0.3px 0 0 rgba(51,51,51,0.22);">33288,12</div>
<div style="position:absolute;left:573.62px;top:363.33px;font-size:8px;line-height:8px;white-space:pre;color:#333;transform:scaleX(0.825);transform-origin:right 0;text-shadow:0.3px 0 0 rgba(51,51,51,0.22);">9008/000</div>
<div style="position:absolute;left:612.30px;top:363.33px;font-size:8px;line-height:8px;white-space:pre;color:#333;transform:scaleX(0.844);transform-origin:left 0;text-shadow:0.3px 0 0 rgba(51,51,51,0.22);">0</div>
<div style="position:absolute;left:130px;top:372.1px;width:487.5px;height:11.5px;background:#dce7f8;"></div>
<div style="position:absolute;left:138.5px;top:372.1px;width:1px;height:11.5px;background:#eef3fb;"></div>
<div style="position:absolute;left:162.0px;top:372.1px;width:1px;height:11.5px;background:#eef3fb;"></div>
<div style="position:absolute;left:176.0px;top:372.1px;width:1px;height:11.5px;background:#eef3fb;"></div>
<div style="position:absolute;left:186.0px;top:372.1px;width:1px;height:11.5px;background:#eef3fb;"></div>
<div style="position:absolute;left:239.0px;top:372.1px;width:1px;height:11.5px;background:#eef3fb;"></div>
<div style="position:absolute;left:282.0px;top:372.1px;width:1px;height:11.5px;background:#eef3fb;"></div>
<div style="position:absolute;left:407.0px;top:372.1px;width:1px;height:11.5px;background:#eef3fb;"></div>
<div style="position:absolute;left:460.0px;top:372.1px;width:1px;height:11.5px;background:#eef3fb;"></div>
<div style="position:absolute;left:512.0px;top:372.1px;width:1px;height:11.5px;background:#eef3fb;"></div>
<div style="position:absolute;left:565.0px;top:372.1px;width:1px;height:11.5px;background:#eef3fb;"></div>
<div style="position:absolute;left:608.0px;top:372.1px;width:1px;height:11.5px;background:#eef3fb;"></div>
<div style="position:absolute;left:151.59px;top:374.73px;font-size:8px;line-height:8px;white-space:pre;color:#333;transform:scaleX(0.825);transform-origin:right 0;text-shadow:0.3px 0 0 rgba(51,51,51,0.22);">18</div>
<svg style="position:absolute;left:165.5px;top:374.3px" width="9" height="8" viewBox="0 0 9 8"><path d="M0.4 2 L3.6 0.3 L8.6 2.5 L5.4 4.5 Z" fill="#f0643a"/><path d="M0.4 2 L0.5 5 L5.4 7.8 L5.4 4.5 Z" fill="#d2401e"/><path d="M5.4 4.5 L8.6 2.5 L8.6 5.2 L5.4 7.8 Z" fill="#e9c0b0"/><path d="M5.4 7.8 L8.6 5.2 L8.6 2.5" fill="none" stroke="#7a1e10" stroke-width="0.7"/><path d="M5.6 6 L8.4 3.8" stroke="#b03020" stroke-width="0.5"/></svg>
<div style="position:absolute;left:179.20px;top:374.73px;font-size:8px;line-height:8px;white-space:pre;color:#333;transform:scaleX(0.825);transform-origin:left 0;text-shadow:0.3px 0 0 rgba(51,51,51,0.22);">1</div>
<div style="position:absolute;left:189.40px;top:374.73px;font-size:8px;line-height:8px;white-space:pre;color:#333;transform:scaleX(0.831);transform-origin:left 0;text-shadow:0.3px 0 0 rgba(51,51,51,0.22);">11.03.2010 /Do</div>
<div style="position:absolute;left:267.83px;top:374.73px;font-size:8px;line-height:8px;white-space:pre;color:#333;transform:scaleX(0.825);transform-origin:right 0;text-shadow:0.3px 0 0 rgba(51,51,51,0.22);">511</div>
<div style="position:absolute;left:285.00px;top:374.73px;font-size:8px;line-height:8px;white-space:pre;color:#333;transform:scaleX(0.802);transform-origin:left 0;text-shadow:0.3px 0 0 rgba(51,51,51,0.22);">Verrechnungskonto Teilzahlungen</div>
<div style="position:absolute;left:433.83px;top:374.73px;font-size:8px;line-height:8px;white-space:pre;color:#333;transform:scaleX(0.825);transform-origin:right 0;text-shadow:0.3px 0 0 rgba(51,51,51,0.22);">583,33</div>
<div style="position:absolute;left:530.62px;top:374.73px;font-size:8px;line-height:8px;white-space:pre;color:#333;transform:scaleX(0.825);transform-origin:right 0;text-shadow:0.3px 0 0 rgba(51,51,51,0.22);">33288,12</div>
<div style="position:absolute;left:573.62px;top:374.73px;font-size:8px;line-height:8px;white-space:pre;color:#333;transform:scaleX(0.825);transform-origin:right 0;text-shadow:0.3px 0 0 rgba(51,51,51,0.22);">9008/000</div>
<div style="position:absolute;left:612.30px;top:374.73px;font-size:8px;line-height:8px;white-space:pre;color:#333;transform:scaleX(0.844);transform-origin:left 0;text-shadow:0.3px 0 0 rgba(51,51,51,0.22);">0</div>
<div style="position:absolute;left:130px;top:383.5px;width:487.5px;height:11.5px;background:#fff;"></div>
<div style="position:absolute;left:138.5px;top:383.5px;width:1px;height:11.5px;background:#e2eaf6;"></div>
<div style="position:absolute;left:162.0px;top:383.5px;width:1px;height:11.5px;background:#e2eaf6;"></div>
<div style="position:absolute;left:176.0px;top:383.5px;width:1px;height:11.5px;background:#e2eaf6;"></div>
<div style="position:absolute;left:186.0px;top:383.5px;width:1px;height:11.5px;background:#e2eaf6;"></div>
<div style="position:absolute;left:239.0px;top:383.5px;width:1px;height:11.5px;background:#e2eaf6;"></div>
<div style="position:absolute;left:282.0px;top:383.5px;width:1px;height:11.5px;background:#e2eaf6;"></div>
<div style="position:absolute;left:407.0px;top:383.5px;width:1px;height:11.5px;background:#e2eaf6;"></div>
<div style="position:absolute;left:460.0px;top:383.5px;width:1px;height:11.5px;background:#e2eaf6;"></div>
<div style="position:absolute;left:512.0px;top:383.5px;width:1px;height:11.5px;background:#e2eaf6;"></div>
<div style="position:absolute;left:565.0px;top:383.5px;width:1px;height:11.5px;background:#e2eaf6;"></div>
<div style="position:absolute;left:608.0px;top:383.5px;width:1px;height:11.5px;background:#e2eaf6;"></div>
<div style="position:absolute;left:151.59px;top:386.13px;font-size:8px;line-height:8px;white-space:pre;color:#333;transform:scaleX(0.825);transform-origin:right 0;text-shadow:0.3px 0 0 rgba(51,51,51,0.22);">19</div>
<svg style="position:absolute;left:165.5px;top:385.7px" width="9" height="8" viewBox="0 0 9 8"><path d="M0.4 2 L3.6 0.3 L8.6 2.5 L5.4 4.5 Z" fill="#f0643a"/><path d="M0.4 2 L0.5 5 L5.4 7.8 L5.4 4.5 Z" fill="#d2401e"/><path d="M5.4 4.5 L8.6 2.5 L8.6 5.2 L5.4 7.8 Z" fill="#e9c0b0"/><path d="M5.4 7.8 L8.6 5.2 L8.6 2.5" fill="none" stroke="#7a1e10" stroke-width="0.7"/><path d="M5.6 6 L8.4 3.8" stroke="#b03020" stroke-width="0.5"/></svg>
<div style="position:absolute;left:179.20px;top:386.13px;font-size:8px;line-height:8px;white-space:pre;color:#333;transform:scaleX(0.825);transform-origin:left 0;text-shadow:0.3px 0 0 rgba(51,51,51,0.22);">1</div>
<div style="position:absolute;left:189.40px;top:386.13px;font-size:8px;line-height:8px;white-space:pre;color:#333;transform:scaleX(0.831);transform-origin:left 0;text-shadow:0.3px 0 0 rgba(51,51,51,0.22);">11.03.2010 /Do</div>
<div style="position:absolute;left:267.24px;top:386.13px;font-size:8px;line-height:8px;white-space:pre;color:#333;transform:scaleX(0.825);transform-origin:right 0;text-shadow:0.3px 0 0 rgba(51,51,51,0.22);">512</div>
<div style="position:absolute;left:285.00px;top:386.13px;font-size:8px;line-height:8px;white-space:pre;color:#333;transform:scaleX(0.802);transform-origin:left 0;text-shadow:0.3px 0 0 rgba(51,51,51,0.22);">Verrechnungskonto Teilzahlungen</div>
<div style="position:absolute;left:433.83px;top:386.13px;font-size:8px;line-height:8px;white-space:pre;color:#333;transform:scaleX(0.825);transform-origin:right 0;text-shadow:0.3px 0 0 rgba(51,51,51,0.22);">583,33</div>
<div style="position:absolute;left:530.62px;top:386.13px;font-size:8px;line-height:8px;white-space:pre;color:#333;transform:scaleX(0.825);transform-origin:right 0;text-shadow:0.3px 0 0 rgba(51,51,51,0.22);">33288,12</div>
<div style="position:absolute;left:573.62px;top:386.13px;font-size:8px;line-height:8px;white-space:pre;color:#333;transform:scaleX(0.825);transform-origin:right 0;text-shadow:0.3px 0 0 rgba(51,51,51,0.22);">9008/000</div>
<div style="position:absolute;left:612.30px;top:386.13px;font-size:8px;line-height:8px;white-space:pre;color:#333;transform:scaleX(0.844);transform-origin:left 0;text-shadow:0.3px 0 0 rgba(51,51,51,0.22);">0</div>
<div style="position:absolute;left:130px;top:394.9px;width:487.5px;height:11.5px;background:#dce7f8;"></div>
<div style="position:absolute;left:138.5px;top:394.9px;width:1px;height:11.5px;background:#eef3fb;"></div>
<div style="position:absolute;left:162.0px;top:394.9px;width:1px;height:11.5px;background:#eef3fb;"></div>
<div style="position:absolute;left:176.0px;top:394.9px;width:1px;height:11.5px;background:#eef3fb;"></div>
<div style="position:absolute;left:186.0px;top:394.9px;width:1px;height:11.5px;background:#eef3fb;"></div>
<div style="position:absolute;left:239.0px;top:394.9px;width:1px;height:11.5px;background:#eef3fb;"></div>
<div style="position:absolute;left:282.0px;top:394.9px;width:1px;height:11.5px;background:#eef3fb;"></div>
<div style="position:absolute;left:407.0px;top:394.9px;width:1px;height:11.5px;background:#eef3fb;"></div>
<div style="position:absolute;left:460.0px;top:394.9px;width:1px;height:11.5px;background:#eef3fb;"></div>
<div style="position:absolute;left:512.0px;top:394.9px;width:1px;height:11.5px;background:#eef3fb;"></div>
<div style="position:absolute;left:565.0px;top:394.9px;width:1px;height:11.5px;background:#eef3fb;"></div>
<div style="position:absolute;left:608.0px;top:394.9px;width:1px;height:11.5px;background:#eef3fb;"></div>
<div style="position:absolute;left:151.59px;top:397.53px;font-size:8px;line-height:8px;white-space:pre;color:#333;transform:scaleX(0.825);transform-origin:right 0;text-shadow:0.3px 0 0 rgba(51,51,51,0.22);">20</div>
<svg style="position:absolute;left:165.5px;top:397.09999999999997px" width="9" height="8" viewBox="0 0 9 8"><path d="M0.4 2 L3.6 0.3 L8.6 2.5 L5.4 4.5 Z" fill="#f0643a"/><path d="M0.4 2 L0.5 5 L5.4 7.8 L5.4 4.5 Z" fill="#d2401e"/><path d="M5.4 4.5 L8.6 2.5 L8.6 5.2 L5.4 7.8 Z" fill="#e9c0b0"/><path d="M5.4 7.8 L8.6 5.2 L8.6 2.5" fill="none" stroke="#7a1e10" stroke-width="0.7"/><path d="M5.6 6 L8.4 3.8" stroke="#b03020" stroke-width="0.5"/></svg>
<div style="position:absolute;left:179.20px;top:397.53px;font-size:8px;line-height:8px;white-space:pre;color:#333;transform:scaleX(0.825);transform-origin:left 0;text-shadow:0.3px 0 0 rgba(51,51,51,0.22);">1</div>
<div style="position:absolute;left:189.40px;top:397.53px;font-size:8px;line-height:8px;white-space:pre;color:#333;transform:scaleX(0.831);transform-origin:left 0;text-shadow:0.3px 0 0 rgba(51,51,51,0.22);">11.03.2010 /Do</div>
<div style="position:absolute;left:245.01px;top:397.53px;font-size:8px;line-height:8px;white-space:pre;color:#333;transform:scaleX(0.825);transform-origin:right 0;text-shadow:0.3px 0 0 rgba(51,51,51,0.22);">10000066</div>
<div style="position:absolute;left:285.00px;top:397.53px;font-size:8px;line-height:8px;white-space:pre;color:#333;transform:scaleX(0.802);transform-origin:left 0;text-shadow:0.3px 0 0 rgba(51,51,51,0.22);">Erl+se 19 % USt</div>
<div style="position:absolute;left:433.83px;top:397.53px;font-size:8px;line-height:8px;white-space:pre;color:#333;transform:scaleX(0.825);transform-origin:right 0;text-shadow:0.3px 0 0 rgba(51,51,51,0.22);">763,93</div>
<div style="position:absolute;left:530.62px;top:397.53px;font-size:8px;line-height:8px;white-space:pre;color:#333;transform:scaleX(0.825);transform-origin:right 0;text-shadow:0.3px 0 0 rgba(51,51,51,0.22);">33288,12</div>
<div style="position:absolute;left:573.62px;top:397.53px;font-size:8px;line-height:8px;white-space:pre;color:#333;transform:scaleX(0.825);transform-origin:right 0;text-shadow:0.3px 0 0 rgba(51,51,51,0.22);">9008/000</div>
<div style="position:absolute;left:612.30px;top:397.53px;font-size:8px;line-height:8px;white-space:pre;color:#333;transform:scaleX(0.844);transform-origin:left 0;text-shadow:0.3px 0 0 rgba(51,51,51,0.22);">0</div>
<div style="position:absolute;left:130px;top:406.3px;width:487.5px;height:11.5px;background:#fff;"></div>
<div style="position:absolute;left:138.5px;top:406.3px;width:1px;height:11.5px;background:#e2eaf6;"></div>
<div style="position:absolute;left:162.0px;top:406.3px;width:1px;height:11.5px;background:#e2eaf6;"></div>
<div style="position:absolute;left:176.0px;top:406.3px;width:1px;height:11.5px;background:#e2eaf6;"></div>
<div style="position:absolute;left:186.0px;top:406.3px;width:1px;height:11.5px;background:#e2eaf6;"></div>
<div style="position:absolute;left:239.0px;top:406.3px;width:1px;height:11.5px;background:#e2eaf6;"></div>
<div style="position:absolute;left:282.0px;top:406.3px;width:1px;height:11.5px;background:#e2eaf6;"></div>
<div style="position:absolute;left:407.0px;top:406.3px;width:1px;height:11.5px;background:#e2eaf6;"></div>
<div style="position:absolute;left:460.0px;top:406.3px;width:1px;height:11.5px;background:#e2eaf6;"></div>
<div style="position:absolute;left:512.0px;top:406.3px;width:1px;height:11.5px;background:#e2eaf6;"></div>
<div style="position:absolute;left:565.0px;top:406.3px;width:1px;height:11.5px;background:#e2eaf6;"></div>
<div style="position:absolute;left:608.0px;top:406.3px;width:1px;height:11.5px;background:#e2eaf6;"></div>
<div style="position:absolute;left:151.59px;top:408.93px;font-size:8px;line-height:8px;white-space:pre;color:#333;transform:scaleX(0.825);transform-origin:right 0;text-shadow:0.3px 0 0 rgba(51,51,51,0.22);">21</div>
<svg style="position:absolute;left:165.5px;top:408.5px" width="9" height="8" viewBox="0 0 9 8"><path d="M0.4 2 L3.6 0.3 L8.6 2.5 L5.4 4.5 Z" fill="#f0643a"/><path d="M0.4 2 L0.5 5 L5.4 7.8 L5.4 4.5 Z" fill="#d2401e"/><path d="M5.4 4.5 L8.6 2.5 L8.6 5.2 L5.4 7.8 Z" fill="#e9c0b0"/><path d="M5.4 7.8 L8.6 5.2 L8.6 2.5" fill="none" stroke="#7a1e10" stroke-width="0.7"/><path d="M5.6 6 L8.4 3.8" stroke="#b03020" stroke-width="0.5"/></svg>
<div style="position:absolute;left:179.20px;top:408.93px;font-size:8px;line-height:8px;white-space:pre;color:#333;transform:scaleX(0.825);transform-origin:left 0;text-shadow:0.3px 0 0 rgba(51,51,51,0.22);">1</div>
<div style="position:absolute;left:189.40px;top:408.93px;font-size:8px;line-height:8px;white-space:pre;color:#333;transform:scaleX(0.831);transform-origin:left 0;text-shadow:0.3px 0 0 rgba(51,51,51,0.22);">11.03.2010 /Do</div>
<div style="position:absolute;left:245.01px;top:408.93px;font-size:8px;line-height:8px;white-space:pre;color:#333;transform:scaleX(0.825);transform-origin:right 0;text-shadow:0.3px 0 0 rgba(51,51,51,0.22);">10000072</div>
<div style="position:absolute;left:285.00px;top:408.93px;font-size:8px;line-height:8px;white-space:pre;color:#333;transform:scaleX(0.802);transform-origin:left 0;text-shadow:0.3px 0 0 rgba(51,51,51,0.22);">Erl+se 19 % USt</div>
<div style="position:absolute;left:429.38px;top:408.93px;font-size:8px;line-height:8px;white-space:pre;color:#333;transform:scaleX(0.825);transform-origin:right 0;text-shadow:0.3px 0 0 rgba(51,51,51,0.22);">5241,71</div>
<div style="position:absolute;left:530.62px;top:408.93px;font-size:8px;line-height:8px;white-space:pre;color:#333;transform:scaleX(0.825);transform-origin:right 0;text-shadow:0.3px 0 0 rgba(51,51,51,0.22);">33288,12</div>
<div style="position:absolute;left:573.62px;top:408.93px;font-size:8px;line-height:8px;white-space:pre;color:#333;transform:scaleX(0.825);transform-origin:right 0;text-shadow:0.3px 0 0 rgba(51,51,51,0.22);">9008/000</div>
<div style="position:absolute;left:612.30px;top:408.93px;font-size:8px;line-height:8px;white-space:pre;color:#333;transform:scaleX(0.844);transform-origin:left 0;text-shadow:0.3px 0 0 rgba(51,51,51,0.22);">0</div>
<div style="position:absolute;left:130px;top:417.70000000000005px;width:487.5px;height:11.5px;background:#dce7f8;"></div>
<div style="position:absolute;left:138.5px;top:417.70000000000005px;width:1px;height:11.5px;background:#eef3fb;"></div>
<div style="position:absolute;left:162.0px;top:417.70000000000005px;width:1px;height:11.5px;background:#eef3fb;"></div>
<div style="position:absolute;left:176.0px;top:417.70000000000005px;width:1px;height:11.5px;background:#eef3fb;"></div>
<div style="position:absolute;left:186.0px;top:417.70000000000005px;width:1px;height:11.5px;background:#eef3fb;"></div>
<div style="position:absolute;left:239.0px;top:417.70000000000005px;width:1px;height:11.5px;background:#eef3fb;"></div>
<div style="position:absolute;left:282.0px;top:417.70000000000005px;width:1px;height:11.5px;background:#eef3fb;"></div>
<div style="position:absolute;left:407.0px;top:417.70000000000005px;width:1px;height:11.5px;background:#eef3fb;"></div>
<div style="position:absolute;left:460.0px;top:417.70000000000005px;width:1px;height:11.5px;background:#eef3fb;"></div>
<div style="position:absolute;left:512.0px;top:417.70000000000005px;width:1px;height:11.5px;background:#eef3fb;"></div>
<div style="position:absolute;left:565.0px;top:417.70000000000005px;width:1px;height:11.5px;background:#eef3fb;"></div>
<div style="position:absolute;left:608.0px;top:417.70000000000005px;width:1px;height:11.5px;background:#eef3fb;"></div>
<div style="position:absolute;left:151.59px;top:420.33px;font-size:8px;line-height:8px;white-space:pre;color:#333;transform:scaleX(0.825);transform-origin:right 0;text-shadow:0.3px 0 0 rgba(51,51,51,0.22);">22</div>
<svg style="position:absolute;left:165.5px;top:419.90000000000003px" width="9" height="8" viewBox="0 0 9 8"><path d="M0.4 2 L3.6 0.3 L8.6 2.5 L5.4 4.5 Z" fill="#f0643a"/><path d="M0.4 2 L0.5 5 L5.4 7.8 L5.4 4.5 Z" fill="#d2401e"/><path d="M5.4 4.5 L8.6 2.5 L8.6 5.2 L5.4 7.8 Z" fill="#e9c0b0"/><path d="M5.4 7.8 L8.6 5.2 L8.6 2.5" fill="none" stroke="#7a1e10" stroke-width="0.7"/><path d="M5.6 6 L8.4 3.8" stroke="#b03020" stroke-width="0.5"/></svg>
<div style="position:absolute;left:179.20px;top:420.33px;font-size:8px;line-height:8px;white-space:pre;color:#333;transform:scaleX(0.825);transform-origin:left 0;text-shadow:0.3px 0 0 rgba(51,51,51,0.22);">3</div>
<div style="position:absolute;left:189.40px;top:420.33px;font-size:8px;line-height:8px;white-space:pre;color:#333;transform:scaleX(0.831);transform-origin:left 0;text-shadow:0.3px 0 0 rgba(51,51,51,0.22);">11.03.2010 /Do</div>
<div style="position:absolute;left:245.01px;top:420.33px;font-size:8px;line-height:8px;white-space:pre;color:#333;transform:scaleX(0.825);transform-origin:right 0;text-shadow:0.3px 0 0 rgba(51,51,51,0.22);">10000072</div>
<div style="position:absolute;left:285.00px;top:420.33px;font-size:8px;line-height:8px;white-space:pre;color:#333;transform:scaleX(0.802);transform-origin:left 0;text-shadow:0.3px 0 0 rgba(51,51,51,0.22);">Saldenvorträge Debitoren (EB)</div>
<div style="position:absolute;left:486.43px;top:420.33px;font-size:8px;line-height:8px;white-space:pre;color:#333;transform:scaleX(0.825);transform-origin:right 0;text-shadow:0.3px 0 0 rgba(51,51,51,0.22);">200,00</div>
<div style="position:absolute;left:530.62px;top:420.33px;font-size:8px;line-height:8px;white-space:pre;color:#333;transform:scaleX(0.825);transform-origin:right 0;text-shadow:0.3px 0 0 rgba(51,51,51,0.22);">33288,12</div>
<div style="position:absolute;left:573.62px;top:420.33px;font-size:8px;line-height:8px;white-space:pre;color:#333;transform:scaleX(0.825);transform-origin:right 0;text-shadow:0.3px 0 0 rgba(51,51,51,0.22);">9008/000</div>
<div style="position:absolute;left:612.30px;top:420.33px;font-size:8px;line-height:8px;white-space:pre;color:#333;transform:scaleX(0.844);transform-origin:left 0;text-shadow:0.3px 0 0 rgba(51,51,51,0.22);">0</div>
<div style="position:absolute;left:130px;top:429.1px;width:487.5px;height:11.5px;background:#fff;"></div>
<div style="position:absolute;left:138.5px;top:429.1px;width:1px;height:11.5px;background:#e2eaf6;"></div>
<div style="position:absolute;left:162.0px;top:429.1px;width:1px;height:11.5px;background:#e2eaf6;"></div>
<div style="position:absolute;left:176.0px;top:429.1px;width:1px;height:11.5px;background:#e2eaf6;"></div>
<div style="position:absolute;left:186.0px;top:429.1px;width:1px;height:11.5px;background:#e2eaf6;"></div>
<div style="position:absolute;left:239.0px;top:429.1px;width:1px;height:11.5px;background:#e2eaf6;"></div>
<div style="position:absolute;left:282.0px;top:429.1px;width:1px;height:11.5px;background:#e2eaf6;"></div>
<div style="position:absolute;left:407.0px;top:429.1px;width:1px;height:11.5px;background:#e2eaf6;"></div>
<div style="position:absolute;left:460.0px;top:429.1px;width:1px;height:11.5px;background:#e2eaf6;"></div>
<div style="position:absolute;left:512.0px;top:429.1px;width:1px;height:11.5px;background:#e2eaf6;"></div>
<div style="position:absolute;left:565.0px;top:429.1px;width:1px;height:11.5px;background:#e2eaf6;"></div>
<div style="position:absolute;left:608.0px;top:429.1px;width:1px;height:11.5px;background:#e2eaf6;"></div>
<div style="position:absolute;left:151.59px;top:431.73px;font-size:8px;line-height:8px;white-space:pre;color:#333;transform:scaleX(0.825);transform-origin:right 0;text-shadow:0.3px 0 0 rgba(51,51,51,0.22);">23</div>
<svg style="position:absolute;left:165.5px;top:431.3px" width="9" height="8" viewBox="0 0 9 8"><path d="M0.4 2 L3.6 0.3 L8.6 2.5 L5.4 4.5 Z" fill="#f0643a"/><path d="M0.4 2 L0.5 5 L5.4 7.8 L5.4 4.5 Z" fill="#d2401e"/><path d="M5.4 4.5 L8.6 2.5 L8.6 5.2 L5.4 7.8 Z" fill="#e9c0b0"/><path d="M5.4 7.8 L8.6 5.2 L8.6 2.5" fill="none" stroke="#7a1e10" stroke-width="0.7"/><path d="M5.6 6 L8.4 3.8" stroke="#b03020" stroke-width="0.5"/></svg>
<div style="position:absolute;left:179.20px;top:431.73px;font-size:8px;line-height:8px;white-space:pre;color:#333;transform:scaleX(0.825);transform-origin:left 0;text-shadow:0.3px 0 0 rgba(51,51,51,0.22);">1</div>
<div style="position:absolute;left:189.40px;top:431.73px;font-size:8px;line-height:8px;white-space:pre;color:#333;transform:scaleX(0.831);transform-origin:left 0;text-shadow:0.3px 0 0 rgba(51,51,51,0.22);">11.03.2010 /Do</div>
<div style="position:absolute;left:245.01px;top:431.73px;font-size:8px;line-height:8px;white-space:pre;color:#333;transform:scaleX(0.825);transform-origin:right 0;text-shadow:0.3px 0 0 rgba(51,51,51,0.22);">20000007</div>
<div style="position:absolute;left:285.00px;top:431.73px;font-size:8px;line-height:8px;white-space:pre;color:#333;transform:scaleX(0.802);transform-origin:left 0;text-shadow:0.3px 0 0 rgba(51,51,51,0.22);">Erl+se 19 % USt</div>
<div style="position:absolute;left:429.38px;top:431.73px;font-size:8px;line-height:8px;white-space:pre;color:#333;transform:scaleX(0.825);transform-origin:right 0;text-shadow:0.3px 0 0 rgba(51,51,51,0.22);">3997,81</div>
<div style="position:absolute;left:530.62px;top:431.73px;font-size:8px;line-height:8px;white-space:pre;color:#333;transform:scaleX(0.825);transform-origin:right 0;text-shadow:0.3px 0 0 rgba(51,51,51,0.22);">33288,12</div>
<div style="position:absolute;left:573.62px;top:431.73px;font-size:8px;line-height:8px;white-space:pre;color:#333;transform:scaleX(0.825);transform-origin:right 0;text-shadow:0.3px 0 0 rgba(51,51,51,0.22);">9008/000</div>
<div style="position:absolute;left:612.30px;top:431.73px;font-size:8px;line-height:8px;white-space:pre;color:#333;transform:scaleX(0.844);transform-origin:left 0;text-shadow:0.3px 0 0 rgba(51,51,51,0.22);">0</div>
<div style="position:absolute;left:130px;top:440.5px;width:487.5px;height:11.5px;background:#dce7f8;"></div>
<div style="position:absolute;left:138.5px;top:440.5px;width:1px;height:11.5px;background:#eef3fb;"></div>
<div style="position:absolute;left:162.0px;top:440.5px;width:1px;height:11.5px;background:#eef3fb;"></div>
<div style="position:absolute;left:176.0px;top:440.5px;width:1px;height:11.5px;background:#eef3fb;"></div>
<div style="position:absolute;left:186.0px;top:440.5px;width:1px;height:11.5px;background:#eef3fb;"></div>
<div style="position:absolute;left:239.0px;top:440.5px;width:1px;height:11.5px;background:#eef3fb;"></div>
<div style="position:absolute;left:282.0px;top:440.5px;width:1px;height:11.5px;background:#eef3fb;"></div>
<div style="position:absolute;left:407.0px;top:440.5px;width:1px;height:11.5px;background:#eef3fb;"></div>
<div style="position:absolute;left:460.0px;top:440.5px;width:1px;height:11.5px;background:#eef3fb;"></div>
<div style="position:absolute;left:512.0px;top:440.5px;width:1px;height:11.5px;background:#eef3fb;"></div>
<div style="position:absolute;left:565.0px;top:440.5px;width:1px;height:11.5px;background:#eef3fb;"></div>
<div style="position:absolute;left:608.0px;top:440.5px;width:1px;height:11.5px;background:#eef3fb;"></div>
<div style="position:absolute;left:151.59px;top:443.13px;font-size:8px;line-height:8px;white-space:pre;color:#333;transform:scaleX(0.825);transform-origin:right 0;text-shadow:0.3px 0 0 rgba(51,51,51,0.22);">24</div>
<svg style="position:absolute;left:165.5px;top:442.7px" width="9" height="8" viewBox="0 0 9 8"><path d="M0.4 2 L3.6 0.3 L8.6 2.5 L5.4 4.5 Z" fill="#f0643a"/><path d="M0.4 2 L0.5 5 L5.4 7.8 L5.4 4.5 Z" fill="#d2401e"/><path d="M5.4 4.5 L8.6 2.5 L8.6 5.2 L5.4 7.8 Z" fill="#e9c0b0"/><path d="M5.4 7.8 L8.6 5.2 L8.6 2.5" fill="none" stroke="#7a1e10" stroke-width="0.7"/><path d="M5.6 6 L8.4 3.8" stroke="#b03020" stroke-width="0.5"/></svg>
<div style="position:absolute;left:179.20px;top:443.13px;font-size:8px;line-height:8px;white-space:pre;color:#333;transform:scaleX(0.825);transform-origin:left 0;text-shadow:0.3px 0 0 rgba(51,51,51,0.22);">1</div>
<div style="position:absolute;left:189.40px;top:443.13px;font-size:8px;line-height:8px;white-space:pre;color:#333;transform:scaleX(0.831);transform-origin:left 0;text-shadow:0.3px 0 0 rgba(51,51,51,0.22);">11.03.2010 /Do</div>
<div style="position:absolute;left:245.01px;top:443.13px;font-size:8px;line-height:8px;white-space:pre;color:#333;transform:scaleX(0.825);transform-origin:right 0;text-shadow:0.3px 0 0 rgba(51,51,51,0.22);">20000016</div>
<div style="position:absolute;left:285.00px;top:443.13px;font-size:8px;line-height:8px;white-space:pre;color:#333;transform:scaleX(0.802);transform-origin:left 0;text-shadow:0.3px 0 0 rgba(51,51,51,0.22);">Erl+se 19 % USt</div>
<div style="position:absolute;left:429.38px;top:443.13px;font-size:8px;line-height:8px;white-space:pre;color:#333;transform:scaleX(0.825);transform-origin:right 0;text-shadow:0.3px 0 0 rgba(51,51,51,0.22);">6068,61</div>
<div style="position:absolute;left:530.62px;top:443.13px;font-size:8px;line-height:8px;white-space:pre;color:#333;transform:scaleX(0.825);transform-origin:right 0;text-shadow:0.3px 0 0 rgba(51,51,51,0.22);">33288,12</div>
<div style="position:absolute;left:573.62px;top:443.13px;font-size:8px;line-height:8px;white-space:pre;color:#333;transform:scaleX(0.825);transform-origin:right 0;text-shadow:0.3px 0 0 rgba(51,51,51,0.22);">9008/000</div>
<div style="position:absolute;left:612.30px;top:443.13px;font-size:8px;line-height:8px;white-space:pre;color:#333;transform:scaleX(0.844);transform-origin:left 0;text-shadow:0.3px 0 0 rgba(51,51,51,0.22);">0</div>
<svg style="position:absolute;left:619px;top:180px" width="7" height="7" viewBox="0 0 7 7"><path d="M0.8 0.8 H6.2" stroke="#a3b08a" stroke-width="0.9"/><path d="M0.8 5.2 L3.5 1.8 L6.2 5.2 Z" fill="#a3b08a"/></svg>
<svg style="position:absolute;left:619px;top:189.5px" width="7" height="7" viewBox="0 0 7 7"><path d="M3.5 0.6 L4.3 2.7 L6.4 3.5 L4.3 4.3 L3.5 6.4 L2.7 4.3 L0.6 3.5 L2.7 2.7 Z" fill="#7ea35e"/></svg>
<svg style="position:absolute;left:619px;top:198px" width="7" height="7" viewBox="0 0 7 7"><path d="M0.8 5.2 L3.5 1.8 L6.2 5.2 Z" fill="#a3b08a"/></svg>
<svg style="position:absolute;left:618.5px;top:294px" width="8" height="8" viewBox="0 0 8 8"><rect x="1" y="1" width="6" height="6" fill="none" stroke="#c4ccb0" stroke-width="0.9"/><path d="M3 1 V7 M5 1 V7" stroke="#c4ccb0" stroke-width="0.8"/></svg>
<svg style="position:absolute;left:618.5px;top:306.5px" width="9" height="9" viewBox="0 0 9 9"><circle cx="4" cy="4" r="2.6" fill="none" stroke="#c4ccbc" stroke-width="0.9"/><path d="M5.8 5.8 L8 8" stroke="#b4c09a" stroke-width="1.2"/></svg>
<svg style="position:absolute;left:618.5px;top:320px" width="8" height="8" viewBox="0 0 8 8"><path d="M1 2.5 H7 M1 5 H7" stroke="#c4ccb0" stroke-width="1"/></svg>
<svg style="position:absolute;left:618.5px;top:332px" width="8" height="8" viewBox="0 0 8 8"><path d="M0.8 1 L7.2 1 L4.5 4.2 L4.5 7.5 L3.5 7.5 L3.5 4.2 Z" fill="#ccd2c0"/></svg>
<svg style="position:absolute;left:619px;top:432px" width="7" height="7" viewBox="0 0 7 7"><path d="M0.8 1.8 L3.5 5.2 L6.2 1.8 Z" fill="#a3b08a"/></svg>
<svg style="position:absolute;left:619px;top:440.5px" width="7" height="7" viewBox="0 0 7 7"><path d="M3.5 0.6 L4.3 2.7 L6.4 3.5 L4.3 4.3 L3.5 6.4 L2.7 4.3 L0.6 3.5 L2.7 2.7 Z" fill="#7ea35e"/></svg>
<svg style="position:absolute;left:619px;top:449px" width="7" height="7" viewBox="0 0 7 7"><path d="M0.8 6.2 H6.2" stroke="#a3b08a" stroke-width="0.9"/><path d="M0.8 1.8 L3.5 5.2 L6.2 1.8 Z" fill="#a3b08a"/></svg>
<svg style="position:absolute;left:11px;top:23.4px" width="5" height="8" viewBox="0 0 5 8"><path d="M4.5 0.5 L0.5 4 L4.5 7.5 Z" fill="#e03a3a"/></svg>
<svg style="position:absolute;left:15.3px;top:23.2px" width="7" height="8" viewBox="0 0 7 8"><rect x="0.5" y="0.5" width="6" height="7" fill="#f4f6fb" stroke="#5a6f9e" stroke-width="1"/><rect x="0.5" y="0.5" width="6" height="1.6" fill="#6f8fcf"/><rect x="2" y="3.2" width="3" height="2.6" fill="#d23a3a"/></svg>
<div style="position:absolute;left:26.60px;top:23.83px;font-size:8px;line-height:8px;white-space:pre;color:#8a8a8a;transform:scaleX(0.776);transform-origin:left 0;text-shadow:0.3px 0 0 rgba(138,138,138,0.22);">Periode</div>
<svg style="position:absolute;left:54.1px;top:23.2px" width="7" height="8" viewBox="0 0 7 8"><rect x="0.5" y="0.5" width="6" height="7" fill="#f4f6fb" stroke="#5a6f9e" stroke-width="1"/><rect x="0.5" y="0.5" width="6" height="1.6" fill="#6f8fcf"/><rect x="2" y="3.2" width="3" height="2.6" fill="#d23a3a"/></svg>
<svg style="position:absolute;left:60.8px;top:23.4px" width="5" height="8" viewBox="0 0 5 8"><path d="M0.5 0.5 L4.5 4 L0.5 7.5 Z" fill="#e03a3a"/></svg>
<div style="position:absolute;left:68.0px;top:20.2px;width:1px;height:12.5px;background:#9aa3b3;"></div>
<div style="position:absolute;left:69.0px;top:20.2px;width:1px;height:12.5px;background:#ffffff;"></div>
<svg style="position:absolute;left:72.2px;top:23.4px" width="5" height="8" viewBox="0 0 5 8"><path d="M4.5 0.5 L0.5 4 L4.5 7.5 Z" fill="#e03a3a"/></svg>
<svg style="position:absolute;left:76.5px;top:23.2px" width="7" height="8" viewBox="0 0 7 8"><rect x="0.5" y="0.5" width="6" height="7" fill="#f4f6fb" stroke="#5a6f9e" stroke-width="1"/><rect x="0.5" y="0.5" width="6" height="1.6" fill="#6f8fcf"/><rect x="2" y="3.2" width="3" height="2.6" fill="#d23a3a"/></svg>
<div style="position:absolute;left:88.90px;top:23.83px;font-size:8px;line-height:8px;white-space:pre;color:#8a8a8a;transform:scaleX(0.771);transform-origin:left 0;text-shadow:0.3px 0 0 rgba(138,138,138,0.22);">Jahr</div>
<svg style="position:absolute;left:107px;top:23.2px" width="7" height="8" viewBox="0 0 7 8"><rect x="0.5" y="0.5" width="6" height="7" fill="#f4f6fb" stroke="#5a6f9e" stroke-width="1"/><rect x="0.5" y="0.5" width="6" height="1.6" fill="#6f8fcf"/><rect x="2" y="3.2" width="3" height="2.6" fill="#d23a3a"/></svg>
<svg style="position:absolute;left:113.6px;top:23.4px" width="5" height="8" viewBox="0 0 5 8"><path d="M0.5 0.5 L4.5 4 L0.5 7.5 Z" fill="#e03a3a"/></svg>
<div style="position:absolute;left:121.1px;top:20.2px;width:1px;height:12.5px;background:#9aa3b3;"></div>
<div style="position:absolute;left:122.1px;top:20.2px;width:1px;height:12.5px;background:#ffffff;"></div>
<svg style="position:absolute;left:125.5px;top:20px" width="12" height="12" viewBox="0 0 12 12"><path d="M1 5.5 L9.8 5.5 L9.8 11.2 L1 11.2 Z" fill="#eef1f7" stroke="#7d8799" stroke-width="0.8"/><path d="M1 5.5 L5.4 8.6 L9.8 5.5" fill="none" stroke="#9aa4b4" stroke-width="0.6"/><path d="M2.6 5.6 C3.4 2.6 6.5 1 10.8 1.6 L11.2 3.6 C8 3.4 5.6 4.4 4.6 6.4 Z" fill="#f0a22c" stroke="#a86a10" stroke-width="0.5"/></svg>
<div style="position:absolute;left:138.50px;top:23.83px;font-size:8px;line-height:8px;white-space:pre;color:#333;transform:scaleX(0.793);transform-origin:left 0;text-shadow:0.3px 0 0 rgba(51,51,51,0.22);">Selektion (F8)</div>
<div style="position:absolute;left:146px;top:30.799999999999997px;width:2.6px;height:0.8px;background:#555;"></div>
<div style="position:absolute;left:183.0px;top:20.2px;width:1px;height:12.5px;background:#9aa3b3;"></div>
<div style="position:absolute;left:184.0px;top:20.2px;width:1px;height:12.5px;background:#ffffff;"></div>
<svg style="position:absolute;left:186.5px;top:20px" width="12" height="12" viewBox="0 0 12 12"><path d="M0.8 3.6 L5.6 0.8 L11.2 3.4 L6.4 6.4 Z" fill="#4a8ad8" stroke="#1c4a8c" stroke-width="0.6"/><path d="M0.8 3.6 L0.8 5.4 L6.4 8.4 L11.2 5.4 L11.2 3.4 L6.4 6.4 Z" fill="#20549c"/><circle cx="3" cy="9.3" r="1.7" fill="none" stroke="#222" stroke-width="0.9"/><circle cx="7" cy="9.8" r="1.7" fill="none" stroke="#222" stroke-width="0.9"/></svg>
<div style="position:absolute;left:199.80px;top:23.83px;font-size:8px;line-height:8px;white-space:pre;color:#333;transform:scaleX(0.788);transform-origin:left 0;text-shadow:0.3px 0 0 rgba(51,51,51,0.22);">Suchen (F10)</div>
<div style="position:absolute;left:199.8px;top:30.799999999999997px;width:4px;height:0.8px;background:#555;"></div>
<svg style="position:absolute;left:243px;top:20px" width="13" height="12" viewBox="0 0 13 12"><path d="M0.6 6.2 L6.2 0.8 L12 4.6 L6.6 11.2 Z" fill="#2f72c8" stroke="#163e7c" stroke-width="0.8"/><path d="M2.2 6.4 L6.3 2.4 L10.4 5" stroke="#a8d0f4" stroke-width="0.9" fill="none"/><path d="M6.6 11.2 L12 4.6 L12 6 L6.8 12 Z" fill="#e8eef8"/></svg>
<div style="position:absolute;left:256.00px;top:23.83px;font-size:8px;line-height:8px;white-space:pre;color:#333;transform:scaleX(0.806);transform-origin:left 0;text-shadow:0.3px 0 0 rgba(51,51,51,0.22);">Primanota (F9)</div>
<div style="position:absolute;left:256px;top:30.799999999999997px;width:4px;height:0.8px;background:#555;"></div>
<svg style="position:absolute;left:305px;top:20px" width="11" height="13" viewBox="0 0 11 13"><path d="M0.8 0.8 L7 0.8 L9.8 3.6 L9.8 12 L0.8 12 Z" fill="#fbfbfb" stroke="#8c8c8c" stroke-width="0.9"/><path d="M5.2 4.6 L5.2 9 M3.8 7.6 L5.2 9 L6.6 7.6" stroke="#a8b0bc" stroke-width="0.7" fill="none"/></svg>
<div style="position:absolute;left:317.00px;top:23.83px;font-size:8px;line-height:8px;white-space:pre;color:#333;transform:scaleX(0.789);transform-origin:left 0;text-shadow:0.3px 0 0 rgba(51,51,51,0.22);">ZV-Posten (F2)</div>
<div style="position:absolute;left:327.3px;top:30.799999999999997px;width:4px;height:0.8px;background:#555;"></div>
<div style="position:absolute;left:365.8px;top:20.2px;width:1px;height:12.5px;background:#9aa3b3;"></div>
<div style="position:absolute;left:366.8px;top:20.2px;width:1px;height:12.5px;background:#ffffff;"></div>
<svg style="position:absolute;left:368.5px;top:20px" width="13" height="13" viewBox="0 0 13 13"><path d="M4 0.8 L11.5 0.8 L11.5 10.5 L4 10.5 Z" fill="#dce8f6" stroke="#8a9ab0" stroke-width="0.7"/><circle cx="6.8" cy="5.6" r="3.6" fill="#f4f8fc" stroke="#56667e" stroke-width="0.9"/><path d="M4.2 8.2 L1 11.6" stroke="#d07a30" stroke-width="2"/></svg>
<div style="position:absolute;left:381.80px;top:23.83px;font-size:8px;line-height:8px;white-space:pre;color:#333;transform:scaleX(0.839);transform-origin:left 0;text-shadow:0.3px 0 0 rgba(51,51,51,0.22);">Ansicht</div>
<div style="position:absolute;left:390.2px;top:30.799999999999997px;width:3.2px;height:0.8px;background:#555;"></div>
<div style="position:absolute;left:408.0px;top:20.2px;width:1px;height:12.5px;background:#9aa3b3;"></div>
<div style="position:absolute;left:409.0px;top:20.2px;width:1px;height:12.5px;background:#ffffff;"></div>
<svg style="position:absolute;left:411px;top:20px" width="13" height="12" viewBox="0 0 13 12"><path d="M3.5 0.8 L9 0.8 L9.5 4.5 L3 4.5 Z" fill="#6a9ad8" stroke="#3a5a90" stroke-width="0.6"/><path d="M0.8 5.5 C0.8 3.8 2 3.6 3 3.6 L10 3.6 C11 3.6 12.2 3.8 12.2 5.5 L12.2 8.6 C12.2 9.6 11.4 10 10.6 10 L2.4 10 C1.6 10 0.8 9.6 0.8 8.6 Z" fill="#c8ced8" stroke="#5e6878" stroke-width="0.8"/><path d="M2.5 6.2 L10.5 6.2" stroke="#f4f6fa" stroke-width="1"/></svg>
<div style="position:absolute;left:425.30px;top:23.83px;font-size:8px;line-height:8px;white-space:pre;color:#333;transform:scaleX(0.802);transform-origin:left 0;text-shadow:0.3px 0 0 rgba(51,51,51,0.22);">Drucken</div>
<div style="position:absolute;left:425.3px;top:30.799999999999997px;width:4.2px;height:0.8px;background:#555;"></div>
<div style="position:absolute;left:453.9px;top:20.2px;width:1px;height:12.5px;background:#9aa3b3;"></div>
<div style="position:absolute;left:454.9px;top:20.2px;width:1px;height:12.5px;background:#ffffff;"></div>
<svg style="position:absolute;left:457px;top:20px" width="14" height="12" viewBox="0 0 14 12"><rect x="4" y="3" width="4" height="4" fill="#d84040" stroke="#902020" stroke-width="0.5"/><circle cx="9.2" cy="2.4" r="2" fill="#38b048"/><path d="M0.5 6.5 L4.5 6.2 L9.5 7.2 L13 8 L10.5 11 L0.5 10.8 Z" fill="#d8803e" stroke="#8a4a1c" stroke-width="0.6"/><path d="M1 7 L1 10.6" stroke="#444" stroke-width="1.2"/></svg>
<div style="position:absolute;left:470.70px;top:23.83px;font-size:8px;line-height:8px;white-space:pre;color:#333;transform:scaleX(0.820);transform-origin:left 0;text-shadow:0.3px 0 0 rgba(51,51,51,0.22);">Extras</div>
<div style="position:absolute;left:474.6px;top:30.799999999999997px;width:3.8px;height:0.8px;background:#555;"></div>
<svg style="position:absolute;left:0;top:0" width="656" height="548" viewBox="0 0 656 548"><path d="M114 183 C128 178.5 165 175.5 230 174 C330 172.6 460 173.2 530 174.6 C580 175.4 610 177 626 179 C637 180.6 641 182.6 637 184.6 C628 186.6 600 188.6 540 190.6 C460 192.6 300 192.4 220 191.4 C160 190.6 128 187.4 114 183 Z" fill="none" stroke="#c92a3c" stroke-width="1.45" opacity="0.92"/></svg>
</body></html>
